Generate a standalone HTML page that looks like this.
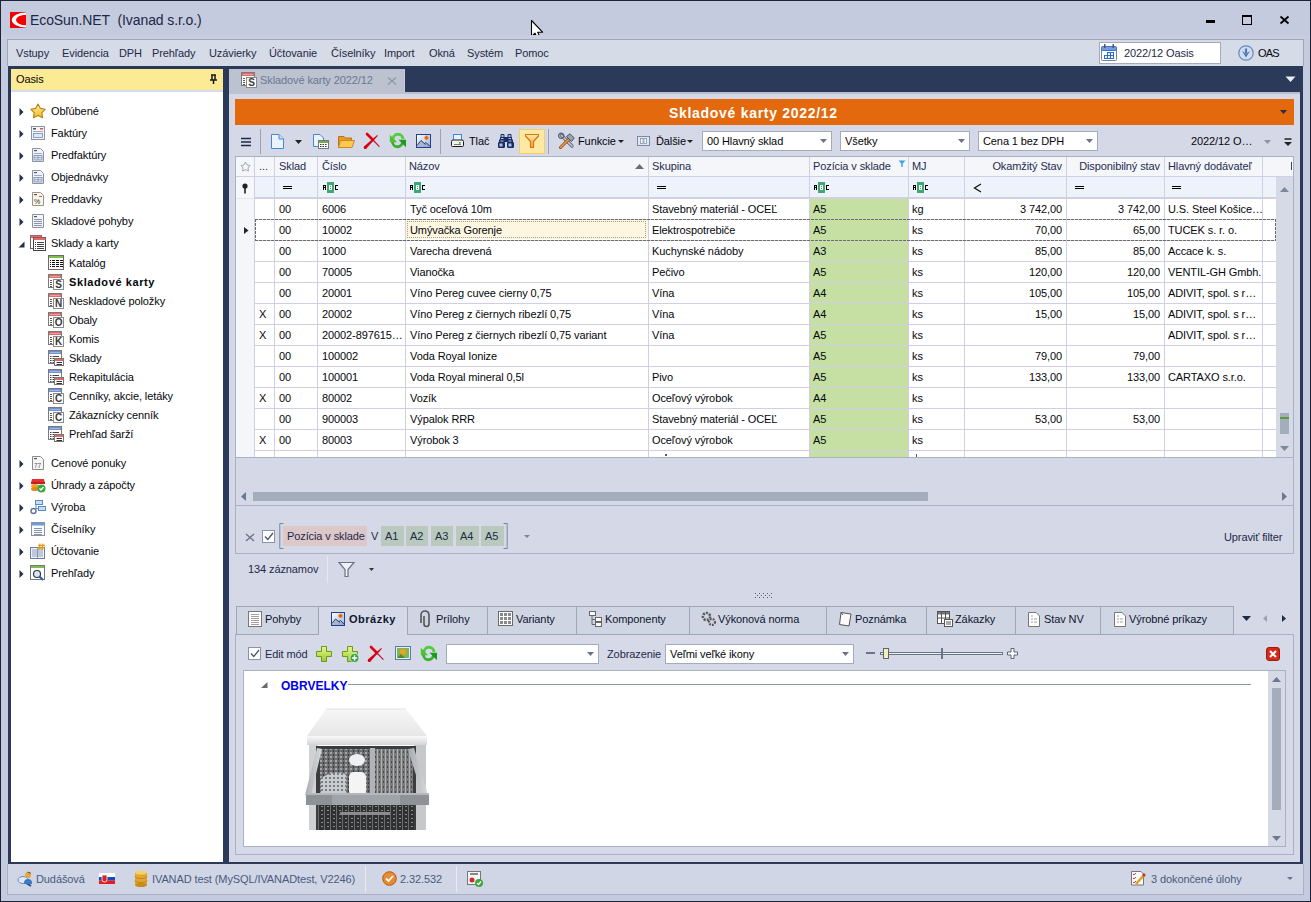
<!DOCTYPE html><html><head><meta charset="utf-8"><style>
*{margin:0;padding:0;box-sizing:content-box}
html,body{width:1311px;height:902px;overflow:hidden;background:#c5cbdf}
body{position:relative;font-family:"Liberation Sans",sans-serif}
.a{position:absolute}
.t{position:absolute;white-space:pre;font-family:"Liberation Sans",sans-serif;letter-spacing:-0.1px}
svg{overflow:visible}
</style></head><body><div class="a" style="left:0px;top:0px;width:1311px;height:902px;background:#1d2534;"></div>
<div class="a" style="left:1px;top:1px;width:1309px;height:900px;background:#c5cbdf;"></div>
<svg class="a" style="left:10px;top:12px" width="16" height="16" viewBox="0 0 16 16"><rect width="16" height="16" fill="#f40000"/><path d="M16 0.6 A14.2 7.4 0 0 0 16 15.4 V13.2 A10 5.2 0 0 1 16 2.8Z" fill="#fff"/></svg>
<div class="t" style="left:30px;top:13px;font-size:14px;line-height:14px;color:#1b2747;letter-spacing:-0.1px">EcoSun.NET&nbsp;&nbsp;(Ivanad s.r.o.)</div>
<div class="a" style="left:1206px;top:20px;width:9px;height:3px;background:#000;"></div>
<div class="a" style="left:1242px;top:15px;width:8px;height:8px;border:1px solid #000;background:transparent;border-top-width:2px;height:7px"></div>
<svg class="a" style="left:1279px;top:15px" width="11" height="10" viewBox="0 0 11 10"><path d="M1.5 1.5 L9.5 8.5 M9.5 1.5 L1.5 8.5" stroke="#000" stroke-width="1.8"/></svg>
<svg class="a" style="left:530px;top:19px" width="15" height="22" viewBox="0 0 15 22"><path d="M1.5 1.5 L1.5 17.5 L5 14.2 L7.6 19.6 L10.2 18.5 L7.7 13.2 L12.6 13.2 Z" fill="#fff" stroke="#000" stroke-width="1.1" stroke-linejoin="round"/></svg>
<div class="a" style="left:1px;top:35px;width:1309px;height:4px;background:#c8cde0;"></div>
<div class="a" style="left:7px;top:39px;width:1297px;height:27px;background:#9ea6b9;"></div>
<div class="a" style="left:8px;top:40px;width:1295px;height:26px;background:#d6dbe8;"></div>
<div class="t" style="left:16px;top:48px;font-size:11px;line-height:11px;color:#1e2a44;">Vstupy</div>
<div class="t" style="left:62px;top:48px;font-size:11px;line-height:11px;color:#1e2a44;">Evidencia</div>
<div class="t" style="left:119px;top:48px;font-size:11px;line-height:11px;color:#1e2a44;">DPH</div>
<div class="t" style="left:152px;top:48px;font-size:11px;line-height:11px;color:#1e2a44;">Prehľady</div>
<div class="t" style="left:209px;top:48px;font-size:11px;line-height:11px;color:#1e2a44;">Uzávierky</div>
<div class="t" style="left:269px;top:48px;font-size:11px;line-height:11px;color:#1e2a44;">Účtovanie</div>
<div class="t" style="left:331px;top:48px;font-size:11px;line-height:11px;color:#1e2a44;">Číselníky</div>
<div class="t" style="left:384px;top:48px;font-size:11px;line-height:11px;color:#1e2a44;">Import</div>
<div class="t" style="left:429px;top:48px;font-size:11px;line-height:11px;color:#1e2a44;">Okná</div>
<div class="t" style="left:467px;top:48px;font-size:11px;line-height:11px;color:#1e2a44;">Systém</div>
<div class="t" style="left:515px;top:48px;font-size:11px;line-height:11px;color:#1e2a44;">Pomoc</div>
<div class="a" style="left:1099px;top:42px;width:120px;height:20px;border:1px solid #a3abbd;background:#fff;"></div>
<svg class="a" style="left:1101px;top:44px" width="17" height="18" viewBox="0 0 17 18"><rect x="0.5" y="3.5" width="15" height="13" rx="1" fill="#fff" stroke="#7a8088"/><rect x="0.5" y="2.5" width="15" height="4" rx="1" fill="#6e9ce6" stroke="#3f6fd0"/><rect x="3" y="0" width="1.5" height="4" fill="#556"/><rect x="11.5" y="0" width="1.5" height="4" fill="#556"/><rect x="6" y="8" width="7" height="4" fill="#2f6cc8"/><rect x="3" y="11" width="10" height="4" fill="#2f6cc8"/><g fill="#e8f4ff"><rect x="7" y="9" width="2" height="2"/><rect x="10" y="9" width="2" height="2"/><rect x="4" y="12" width="2" height="2"/><rect x="7" y="12" width="2" height="2"/><rect x="10" y="12" width="2" height="2"/></g></svg>
<div class="t" style="left:1124px;top:48px;font-size:11px;line-height:11px;color:#1e2a44;">2022/12 Oasis</div>
<svg class="a" style="left:1238px;top:45px" width="16" height="16" viewBox="0 0 16 16"><circle cx="8" cy="8" r="7.2" fill="none" stroke="#5a8ac6" stroke-width="1.2"/><path d="M8 3.5 V8" stroke="#4a7cc0" stroke-width="2.2"/><path d="M4 6 L8 12.5 L12 6 L8 8.5Z" fill="#4a7cc0"/></svg>
<div class="t" style="left:1258px;top:48px;font-size:11px;line-height:11px;color:#05060c;letter-spacing:-0.8px">OAS</div>
<div class="a" style="left:8px;top:66px;width:1295px;height:798px;background:#2b3a58;"></div>
<div class="a" style="left:11px;top:69px;width:212px;height:793px;background:#ffffff;"></div>
<div class="a" style="left:11px;top:69px;width:212px;height:21px;background:#fdea94;"></div>
<div class="a" style="left:11px;top:90px;width:212px;height:2px;background:#d3dbee;"></div>
<div class="t" style="left:16px;top:74px;font-size:11px;line-height:11px;color:#05060c;">Oasis</div>
<svg class="a" style="left:209px;top:74px" width="9" height="10" viewBox="0 0 9 10"><path d="M2 1 H7 M3 1 V6 M6 1 V6 M1 6 H8 M4.5 6 V10" stroke="#1a1a1a" stroke-width="1.5" fill="none"/></svg>
<svg class="a" style="left:19px;top:108px" width="5" height="8" viewBox="0 0 5 8"><path d="M0.5 0 L4.5 4 L0.5 8Z" fill="#24304a"/></svg>
<svg class="a" style="left:30px;top:103px" width="16" height="16" viewBox="0 0 16 16"><defs><linearGradient id="stg" x1="0" y1="0" x2="0" y2="1"><stop offset="0" stop-color="#fff3a0"/><stop offset="1" stop-color="#f0b820"/></linearGradient></defs><path d="M8 1 L10.4 5.4 L15.2 6.2 L11.8 9.8 L12.6 14.8 L8 12.6 L3.4 14.8 L4.2 9.8 L0.8 6.2 L5.6 5.4Z" fill="url(#stg)" stroke="#b88010" stroke-width="1.1" stroke-linejoin="round"/></svg>
<div class="t" style="left:51px;top:106px;font-size:11px;line-height:11px;color:#05060c;">Obľúbené</div>
<svg class="a" style="left:19px;top:130px" width="5" height="8" viewBox="0 0 5 8"><path d="M0.5 0 L4.5 4 L0.5 8Z" fill="#24304a"/></svg>
<svg class="a" style="left:30px;top:125px" width="16" height="16" viewBox="0 0 16 16"><rect x="1.5" y="1.5" width="13" height="13" fill="#f2f4f8" stroke="#8a94a6"/><rect x="3" y="3" width="3" height="1.5" fill="#555"/><rect x="10" y="3" width="3" height="1.5" fill="#e05050"/><rect x="3" y="6" width="10" height="0.8" fill="#8899bb"/><rect x="3.5" y="8.5" width="9" height="4" fill="#dfe7f4" stroke="#7a8cb0" stroke-width="0.8"/></svg>
<div class="t" style="left:51px;top:128px;font-size:11px;line-height:11px;color:#05060c;">Faktúry</div>
<svg class="a" style="left:19px;top:152px" width="5" height="8" viewBox="0 0 5 8"><path d="M0.5 0 L4.5 4 L0.5 8Z" fill="#24304a"/></svg>
<svg class="a" style="left:30px;top:147px" width="16" height="16" viewBox="0 0 16 16"><path d="M2.5 1.5 H10.5 L13.5 4.5 V14.5 H2.5Z" fill="#f2f4f8" stroke="#8a94a6"/><rect x="4" y="3" width="3" height="1.2" fill="#555"/><rect x="4" y="6" width="8" height="0.8" fill="#8899bb"/><rect x="4" y="8.5" width="8" height="4.5" fill="#dfe7f4" stroke="#7a8cb0" stroke-width="0.8"/><path d="M4 10.7 H12 M8 8.5 V13" stroke="#7a8cb0" stroke-width="0.7"/></svg>
<div class="t" style="left:51px;top:150px;font-size:11px;line-height:11px;color:#05060c;">Predfaktúry</div>
<svg class="a" style="left:19px;top:174px" width="5" height="8" viewBox="0 0 5 8"><path d="M0.5 0 L4.5 4 L0.5 8Z" fill="#24304a"/></svg>
<svg class="a" style="left:30px;top:169px" width="16" height="16" viewBox="0 0 16 16"><path d="M2.5 1.5 H10.5 L13.5 4.5 V14.5 H2.5Z" fill="#f2f4f8" stroke="#8a94a6"/><rect x="4" y="3" width="3" height="1.2" fill="#555"/><rect x="4" y="6" width="8" height="0.8" fill="#8899bb"/><rect x="4" y="8.5" width="8" height="4.5" fill="#dfe7f4" stroke="#7a8cb0" stroke-width="0.8"/><path d="M4 10.7 H12 M8 8.5 V13" stroke="#7a8cb0" stroke-width="0.7"/></svg>
<div class="t" style="left:51px;top:172px;font-size:11px;line-height:11px;color:#05060c;">Objednávky</div>
<svg class="a" style="left:19px;top:196px" width="5" height="8" viewBox="0 0 5 8"><path d="M0.5 0 L4.5 4 L0.5 8Z" fill="#24304a"/></svg>
<svg class="a" style="left:30px;top:191px" width="16" height="16" viewBox="0 0 16 16"><path d="M2.5 1.5 H10.5 L13.5 4.5 V14.5 H2.5Z" fill="#f8f6ee" stroke="#9a9480"/><rect x="4" y="3" width="3" height="1.2" fill="#555"/><rect x="9" y="5" width="3" height="1" fill="#e05050"/><text x="4" y="13" font-size="7" font-family="Liberation Sans" fill="#333">%</text></svg>
<div class="t" style="left:51px;top:194px;font-size:11px;line-height:11px;color:#05060c;">Preddavky</div>
<svg class="a" style="left:19px;top:218px" width="5" height="8" viewBox="0 0 5 8"><path d="M0.5 0 L4.5 4 L0.5 8Z" fill="#24304a"/></svg>
<svg class="a" style="left:30px;top:213px" width="16" height="16" viewBox="0 0 16 16"><path d="M2.5 1.5 H13.5 V14.5 H2.5Z" fill="#f4f5f8" stroke="#8a94a6"/><rect x="4" y="3" width="3" height="1.2" fill="#555"/><path d="M4 6.5 H12 M4 8.5 H12 M4 10.5 H12 M4 12.5 H12" stroke="#8a94a6" stroke-width="1"/></svg>
<div class="t" style="left:51px;top:216px;font-size:11px;line-height:11px;color:#05060c;">Skladové pohyby</div>
<svg class="a" style="left:18px;top:241px" width="7" height="7" viewBox="0 0 7 7"><path d="M6.5 0.5 V6.5 H0.5Z" fill="#24304a"/></svg>
<svg class="a" style="left:30px;top:235px" width="17" height="16" viewBox="0 0 17 16"><rect x="0.5" y="0.5" width="11" height="13" fill="#fff" stroke="#666"/><rect x="0.5" y="0.5" width="11" height="2.5" fill="#e06a6a"/><rect x="3.5" y="2.5" width="12" height="13" fill="#fff" stroke="#444"/><rect x="3.5" y="2.5" width="12" height="2.5" fill="#e06a6a"/><path d="M5 7.5 H6 M7 7.5 H14 M5 9.5 H6 M7 9.5 H14 M5 11.5 H6 M7 11.5 H14 M5 13.5 H6 M7 13.5 H14" stroke="#444" stroke-width="1"/></svg>
<div class="t" style="left:51px;top:238px;font-size:11px;line-height:11px;color:#05060c;">Sklady a karty</div>
<svg class="a" style="left:48px;top:255px" width="16" height="16" viewBox="0 0 16 16"><rect x="0.5" y="0.5" width="15" height="14" fill="#fff" stroke="#6a6a6a"/><rect x="1" y="1" width="14" height="2" fill="#7cc04a"/><rect x="2" y="5" width="1" height="1" fill="#111"/><rect x="4" y="5" width="3" height="1" fill="#111"/><rect x="8" y="5" width="3" height="1" fill="#111"/><rect x="12" y="5" width="3" height="1" fill="#111"/><rect x="2" y="7" width="1" height="1" fill="#111"/><rect x="4" y="7" width="3" height="1" fill="#111"/><rect x="8" y="7" width="3" height="1" fill="#111"/><rect x="12" y="7" width="3" height="1" fill="#111"/><rect x="2" y="9" width="1" height="1" fill="#111"/><rect x="4" y="9" width="3" height="1" fill="#111"/><rect x="8" y="9" width="3" height="1" fill="#111"/><rect x="12" y="9" width="3" height="1" fill="#111"/><rect x="2" y="11" width="1" height="1" fill="#111"/><rect x="4" y="11" width="3" height="1" fill="#111"/><rect x="8" y="11" width="3" height="1" fill="#111"/><rect x="12" y="11" width="3" height="1" fill="#111"/></svg>
<div class="t" style="left:69px;top:258px;font-size:11px;line-height:11px;color:#05060c;">Katalóg</div>
<svg class="a" style="left:48px;top:274px" width="16" height="16" viewBox="0 0 16 16"><rect x="0.5" y="0.5" width="13" height="13" fill="#fff" stroke="#7a7a7a"/><rect x="1" y="1" width="12" height="3" fill="#e06a6a"/><rect x="2" y="2" width="10" height="1" fill="#fff" opacity="0.35"/><path d="M2 6.5 H4 M2 8.5 H4 M2 10.5 H4 M2 12.5 H4" stroke="#555" stroke-width="1"/><rect x="5.5" y="5.5" width="10" height="10" fill="#fff" stroke="#8a8a8a"/><text x="10.7" y="14" text-anchor="middle" font-size="10" font-weight="bold" font-family="Liberation Sans" fill="#3a3a3a">S</text></svg>
<div class="t" style="left:69px;top:277px;font-size:11px;line-height:11px;color:#05060c;font-weight:bold;letter-spacing:0.6px">Skladové karty</div>
<svg class="a" style="left:48px;top:293px" width="16" height="16" viewBox="0 0 16 16"><rect x="0.5" y="0.5" width="13" height="13" fill="#fff" stroke="#7a7a7a"/><rect x="1" y="1" width="12" height="3" fill="#e06a6a"/><rect x="2" y="2" width="10" height="1" fill="#fff" opacity="0.35"/><path d="M2 6.5 H4 M2 8.5 H4 M2 10.5 H4 M2 12.5 H4" stroke="#555" stroke-width="1"/><rect x="5.5" y="5.5" width="10" height="10" fill="#fff" stroke="#8a8a8a"/><text x="10.7" y="14" text-anchor="middle" font-size="10" font-weight="bold" font-family="Liberation Sans" fill="#3a3a3a">N</text></svg>
<div class="t" style="left:69px;top:296px;font-size:11px;line-height:11px;color:#05060c;">Neskladové položky</div>
<svg class="a" style="left:48px;top:312px" width="16" height="16" viewBox="0 0 16 16"><rect x="0.5" y="0.5" width="13" height="13" fill="#fff" stroke="#7a7a7a"/><rect x="1" y="1" width="12" height="3" fill="#e06a6a"/><rect x="2" y="2" width="10" height="1" fill="#fff" opacity="0.35"/><path d="M2 6.5 H4 M2 8.5 H4 M2 10.5 H4 M2 12.5 H4" stroke="#555" stroke-width="1"/><rect x="5.5" y="5.5" width="10" height="10" fill="#fff" stroke="#8a8a8a"/><text x="10.7" y="14" text-anchor="middle" font-size="10" font-weight="bold" font-family="Liberation Sans" fill="#3a3a3a">O</text></svg>
<div class="t" style="left:69px;top:315px;font-size:11px;line-height:11px;color:#05060c;">Obaly</div>
<svg class="a" style="left:48px;top:331px" width="16" height="16" viewBox="0 0 16 16"><rect x="0.5" y="0.5" width="13" height="13" fill="#fff" stroke="#7a7a7a"/><rect x="1" y="1" width="12" height="3" fill="#e06a6a"/><rect x="2" y="2" width="10" height="1" fill="#fff" opacity="0.35"/><path d="M2 6.5 H4 M2 8.5 H4 M2 10.5 H4 M2 12.5 H4" stroke="#555" stroke-width="1"/><rect x="5.5" y="5.5" width="10" height="10" fill="#fff" stroke="#8a8a8a"/><text x="10.7" y="14" text-anchor="middle" font-size="10" font-weight="bold" font-family="Liberation Sans" fill="#3a3a3a">K</text></svg>
<div class="t" style="left:69px;top:334px;font-size:11px;line-height:11px;color:#05060c;">Komis</div>
<svg class="a" style="left:48px;top:350px" width="16" height="16" viewBox="0 0 16 16"><rect x="0.5" y="0.5" width="13" height="13" fill="#fff" stroke="#7a7a7a"/><rect x="1" y="1" width="12" height="3" fill="#6d8fd8"/><rect x="2" y="2" width="10" height="1" fill="#fff" opacity="0.35"/><path d="M2 6.5 H3.5 M2 8.5 H3.5 M2 10.5 H3.5 M2 12.5 H3.5 M4.5 6.5 H11 M4.5 8.5 H7 M4.5 10.5 H6 M4.5 12.5 H6" stroke="#444" stroke-width="1"/><rect x="6.5" y="8.5" width="9" height="7" fill="#fff" stroke="#777"/><rect x="7" y="9" width="8" height="2" fill="#e06a6a"/><path d="M8.5 12.5 H14 M8.5 14.5 H14" stroke="#333" stroke-width="1"/></svg>
<div class="t" style="left:69px;top:353px;font-size:11px;line-height:11px;color:#05060c;">Sklady</div>
<svg class="a" style="left:48px;top:369px" width="16" height="16" viewBox="0 0 16 16"><rect x="0.5" y="0.5" width="13" height="13" fill="#fff" stroke="#7a7a7a"/><rect x="1" y="1" width="12" height="3" fill="#6d8fd8"/><rect x="2" y="2" width="10" height="1" fill="#fff" opacity="0.35"/><path d="M2 6.5 H3.5 M2 8.5 H3.5 M2 10.5 H3.5 M2 12.5 H3.5 M4.5 6.5 H11 M4.5 8.5 H7 M4.5 10.5 H6 M4.5 12.5 H6" stroke="#444" stroke-width="1"/><rect x="6.5" y="8.5" width="9" height="7" fill="#fff" stroke="#777"/><rect x="7" y="9" width="8" height="2" fill="#e06a6a"/><path d="M8.5 12.5 H14 M8.5 14.5 H14" stroke="#333" stroke-width="1"/></svg>
<div class="t" style="left:69px;top:372px;font-size:11px;line-height:11px;color:#05060c;">Rekapitulácia</div>
<svg class="a" style="left:48px;top:388px" width="16" height="16" viewBox="0 0 16 16"><rect x="0.5" y="0.5" width="13" height="13" fill="#fff" stroke="#7a7a7a"/><rect x="1" y="1" width="12" height="3" fill="#6d8fd8"/><rect x="2" y="2" width="10" height="1" fill="#fff" opacity="0.35"/><path d="M2 6.5 H4 M2 8.5 H4 M2 10.5 H4 M2 12.5 H4" stroke="#555" stroke-width="1"/><rect x="5.5" y="5.5" width="10" height="10" fill="#fff" stroke="#8a8a8a"/><text x="10.7" y="14" text-anchor="middle" font-size="10" font-weight="bold" font-family="Liberation Sans" fill="#3a3a3a">C</text></svg>
<div class="t" style="left:69px;top:391px;font-size:11px;line-height:11px;color:#05060c;">Cenníky, akcie, letáky</div>
<svg class="a" style="left:48px;top:407px" width="16" height="16" viewBox="0 0 16 16"><rect x="0.5" y="0.5" width="13" height="13" fill="#fff" stroke="#7a7a7a"/><rect x="1" y="1" width="12" height="3" fill="#6d8fd8"/><rect x="2" y="2" width="10" height="1" fill="#fff" opacity="0.35"/><path d="M2 6.5 H4 M2 8.5 H4 M2 10.5 H4 M2 12.5 H4" stroke="#555" stroke-width="1"/><rect x="5.5" y="5.5" width="10" height="10" fill="#fff" stroke="#8a8a8a"/><text x="10.7" y="14" text-anchor="middle" font-size="10" font-weight="bold" font-family="Liberation Sans" fill="#3a3a3a">C</text></svg>
<div class="t" style="left:69px;top:410px;font-size:11px;line-height:11px;color:#05060c;">Zákaznícky cenník</div>
<svg class="a" style="left:48px;top:426px" width="16" height="16" viewBox="0 0 16 16"><rect x="0.5" y="0.5" width="13" height="13" fill="#fff" stroke="#7a7a7a"/><rect x="1" y="1" width="12" height="3" fill="#6d8fd8"/><rect x="2" y="2" width="10" height="1" fill="#fff" opacity="0.35"/><path d="M2 6.5 H3.5 M2 8.5 H3.5 M2 10.5 H3.5 M2 12.5 H3.5 M4.5 6.5 H11 M4.5 8.5 H7 M4.5 10.5 H6 M4.5 12.5 H6" stroke="#444" stroke-width="1"/><rect x="6.5" y="8.5" width="9" height="7" fill="#fff" stroke="#777"/><rect x="7" y="9" width="8" height="2" fill="#e06a6a"/><path d="M8.5 12.5 H14 M8.5 14.5 H14" stroke="#333" stroke-width="1"/></svg>
<div class="t" style="left:69px;top:429px;font-size:11px;line-height:11px;color:#05060c;">Prehľad šarží</div>
<svg class="a" style="left:19px;top:460px" width="5" height="8" viewBox="0 0 5 8"><path d="M0.5 0 L4.5 4 L0.5 8Z" fill="#24304a"/></svg>
<svg class="a" style="left:30px;top:455px" width="16" height="16" viewBox="0 0 16 16"><path d="M2.5 1.5 H10.5 L13.5 4.5 V14.5 H2.5Z" fill="#f6f6f6" stroke="#8a8a8a"/><rect x="4" y="3" width="3" height="1.2" fill="#555"/><text x="4" y="12.5" font-size="6.5" font-family="Liberation Sans" fill="#555">77</text></svg>
<div class="t" style="left:51px;top:458px;font-size:11px;line-height:11px;color:#05060c;">Cenové ponuky</div>
<svg class="a" style="left:19px;top:482px" width="5" height="8" viewBox="0 0 5 8"><path d="M0.5 0 L4.5 4 L0.5 8Z" fill="#24304a"/></svg>
<svg class="a" style="left:30px;top:477px" width="16" height="16" viewBox="0 0 16 16"><path d="M1 6 L2 2 H14 L15 6Z" fill="#e53030"/><rect x="1" y="5" width="14" height="2" fill="#c81e1e"/><ellipse cx="5" cy="9" rx="4" ry="2" fill="#f0a030"/><ellipse cx="5" cy="12" rx="4" ry="2" fill="#e08a20"/><circle cx="11.5" cy="11.5" r="4" fill="#3aa83a"/><path d="M9.5 11.5 L11 13 L13.5 10" stroke="#fff" stroke-width="1.3" fill="none"/></svg>
<div class="t" style="left:51px;top:480px;font-size:11px;line-height:11px;color:#05060c;">Úhrady a zápočty</div>
<svg class="a" style="left:19px;top:504px" width="5" height="8" viewBox="0 0 5 8"><path d="M0.5 0 L4.5 4 L0.5 8Z" fill="#24304a"/></svg>
<svg class="a" style="left:30px;top:499px" width="16" height="16" viewBox="0 0 16 16"><rect x="5.5" y="1.5" width="7" height="4" fill="#c8dcf4" stroke="#5a8ac6"/><rect x="8.5" y="7.5" width="7" height="4" fill="#c8dcf4" stroke="#5a8ac6"/><path d="M6 6 V9.5 H8.5" stroke="#5a8ac6" fill="none"/><circle cx="3.5" cy="12" r="2.5" fill="none" stroke="#667799" stroke-width="1.5"/></svg>
<div class="t" style="left:51px;top:502px;font-size:11px;line-height:11px;color:#05060c;">Výroba</div>
<svg class="a" style="left:19px;top:526px" width="5" height="8" viewBox="0 0 5 8"><path d="M0.5 0 L4.5 4 L0.5 8Z" fill="#24304a"/></svg>
<svg class="a" style="left:30px;top:521px" width="16" height="16" viewBox="0 0 16 16"><rect x="1.5" y="1.5" width="13" height="13" fill="#fafbfd" stroke="#8a94a6"/><rect x="2" y="2" width="12" height="2.5" fill="#6d9ad8"/><path d="M4 7.5 H12 M4 9.5 H12 M4 11.5 H12 M4 13.5 H12" stroke="#8a94a6" stroke-width="1"/></svg>
<div class="t" style="left:51px;top:524px;font-size:11px;line-height:11px;color:#05060c;">Číselníky</div>
<svg class="a" style="left:19px;top:548px" width="5" height="8" viewBox="0 0 5 8"><path d="M0.5 0 L4.5 4 L0.5 8Z" fill="#24304a"/></svg>
<svg class="a" style="left:30px;top:543px" width="16" height="16" viewBox="0 0 16 16"><rect x="0.5" y="4.5" width="14" height="11" fill="#eef2f8" stroke="#6a7ea8"/><path d="M2 7 H13 M2 9 H13 M2 11 H13 M2 13 H13 M7.5 5 V15" stroke="#7a8cb0" stroke-width="0.8"/><path d="M10 0.5 L9 7 M13 0.5 L12 7 M8 2.5 H15 M7.5 5 H14.5" stroke="#e0a020" stroke-width="1.3"/></svg>
<div class="t" style="left:51px;top:546px;font-size:11px;line-height:11px;color:#05060c;">Účtovanie</div>
<svg class="a" style="left:19px;top:570px" width="5" height="8" viewBox="0 0 5 8"><path d="M0.5 0 L4.5 4 L0.5 8Z" fill="#24304a"/></svg>
<svg class="a" style="left:30px;top:565px" width="16" height="16" viewBox="0 0 16 16"><rect x="0.5" y="0.5" width="14" height="14" fill="#fff" stroke="#777"/><rect x="1" y="1" width="13" height="2" fill="#7cc04a"/><circle cx="7" cy="9" r="3.5" fill="#dde8f4" stroke="#334" stroke-width="1.2"/><path d="M9.5 11.5 L13 15" stroke="#2a5ca8" stroke-width="2"/></svg>
<div class="t" style="left:51px;top:568px;font-size:11px;line-height:11px;color:#05060c;">Prehľady</div>
<div class="a" style="left:229px;top:69px;width:176px;height:25px;background:#bcc2cf;"></div>
<div class="a" style="left:404px;top:69px;width:1px;height:23px;background:#c6ccd8;"></div>
<div class="a" style="left:405px;top:92px;width:895px;height:2px;background:#b9c0cc;"></div>
<svg class="a" style="left:241px;top:72px" width="16" height="16" viewBox="0 0 16 16"><rect x="0.5" y="0.5" width="13" height="13" fill="#fff" stroke="#7a7a7a"/><rect x="1" y="1" width="12" height="3" fill="#e06a6a"/><rect x="2" y="2" width="10" height="1" fill="#fff" opacity="0.35"/><path d="M2 6.5 H4 M2 8.5 H4 M2 10.5 H4 M2 12.5 H4" stroke="#555" stroke-width="1"/><rect x="5.5" y="5.5" width="10" height="10" fill="#fff" stroke="#8a8a8a"/><text x="10.7" y="14" text-anchor="middle" font-size="10" font-weight="bold" font-family="Liberation Sans" fill="#3a3a3a">S</text></svg>
<div class="t" style="left:260px;top:75px;font-size:11px;line-height:11px;color:#6a7894;">Skladové karty 2022/12</div>
<svg class="a" style="left:387px;top:77px" width="10" height="8" viewBox="0 0 10 8"><path d="M1 0.5 L9 7.5 M9 0.5 L1 7.5" stroke="#8f98a8" stroke-width="1.3"/></svg>
<svg class="a" style="left:1285px;top:76px" width="11" height="7" viewBox="0 0 11 7"><path d="M0.5 0.5 H10.5 L5.5 6Z" fill="#e8ecf4"/></svg>
<div class="a" style="left:229px;top:94px;width:1071px;height:768px;background:#d5d9e7;"></div>
<div class="a" style="left:235px;top:99px;width:1059px;height:26px;background:#e3690c;"></div>
<div class="t" style="left:669px;top:106px;font-size:14px;line-height:14px;color:#ffffff;font-weight:bold;letter-spacing:0.7px">Skladové karty 2022/12</div>
<svg class="a" style="left:1280px;top:110px" width="7" height="5" viewBox="0 0 7 5"><path d="M0 0 H7 L3.5 4Z" fill="#2b2b3a"/></svg>
<svg class="a" style="left:241px;top:137px" width="11" height="10" viewBox="0 0 11 10"><path d="M0 1.5 H10 M0 5 H10 M0 8.5 H10" stroke="#1f2a48" stroke-width="1.6"/></svg>
<div class="a" style="left:260px;top:129px;width:1px;height:25px;background:#9aa3b5;"></div>
<svg class="a" style="left:271px;top:134px" width="13" height="15" viewBox="0 0 13 15"><path d="M0.5 0.5 H8 L12.5 5 V14.5 H0.5Z" fill="#eaf2fc" stroke="#4a86d0"/><path d="M8 0.5 V5 H12.5" fill="#cfe0f6" stroke="#4a86d0"/></svg>
<svg class="a" style="left:295px;top:140px" width="7" height="4" viewBox="0 0 7 4"><path d="M0 0 H7 L3.5 4Z" fill="#222"/></svg>
<svg class="a" style="left:313px;top:134px" width="16" height="15" viewBox="0 0 16 15"><path d="M0.5 0.5 H7 L10.5 4 V12.5 H0.5Z" fill="#eaf2fc" stroke="#4a86d0"/><rect x="5.5" y="6.5" width="10" height="8" fill="#fff" stroke="#777"/><rect x="6" y="7" width="9" height="2" fill="#6fb04a"/><path d="M7 10.5 H14 M7 12.5 H14" stroke="#333" stroke-width="1" stroke-dasharray="1.5 1"/></svg>
<svg class="a" style="left:338px;top:135px" width="17" height="13" viewBox="0 0 17 13"><path d="M0.5 1.5 H6 L7.5 3 H13.5 V12.5 H0.5Z" fill="#e89a28" stroke="#c07010"/><path d="M2.5 5.5 H16.5 L14 12.5 H0.5Z" fill="#fcc850" stroke="#c88a20"/></svg>
<svg class="a" style="left:363px;top:131px" width="18" height="19" viewBox="0 0 18 19"><path d="M4 3 L10 9" stroke="#e00010" stroke-width="2.6" stroke-linecap="round"/><path d="M3.4 17.5 L1.2 15.3 L14.2 4 L14.9 4.8Z" fill="#d80010"/><circle cx="2.3" cy="16.4" r="1.6" fill="#d80010"/><path d="M10 9 L16.4 15.6" stroke="#c01030" stroke-width="1.1"/></svg>
<svg class="a" style="left:389px;top:133px" width="18" height="16" viewBox="0 0 18 16"><path d="M4 6.5 A5 5 0 0 1 14 6" fill="none" stroke="#56cc3a" stroke-width="2.8"/><path d="M0.8 1.8 V9.2 H8.2Z" fill="#4cc232"/><path d="M3.5 9 A5 5 0 0 0 13.5 8.5" fill="none" stroke="#38b02a" stroke-width="2.8"/><path d="M9.5 6.8 H17 V14.2Z" fill="#1e9a1e"/></svg>
<svg class="a" style="left:416px;top:134px" width="16" height="15" viewBox="0 0 16 15"><defs><linearGradient id="imgg" x1="0" y1="0" x2="1" y2="1"><stop offset="0" stop-color="#ffffff"/><stop offset="1" stop-color="#98b4e8"/></linearGradient></defs><rect x="0.5" y="0.5" width="14" height="13" fill="url(#imgg)" stroke="#20408a"/><path d="M1 12 L5 6.5 L9 10 L11 8.5 L14 11.5 V13 H1Z" fill="#8a9cc4" opacity="0.55"/><path d="M1 11.5 L5 6.5 L9.5 10.5 M8.5 9.5 L10 8.5 L14 12.5" fill="none" stroke="#2a3040" stroke-width="0.9"/><circle cx="10.5" cy="3.8" r="1.9" fill="#e85a10" stroke="#f4904a" stroke-width="0.8"/></svg>
<div class="a" style="left:440px;top:129px;width:1px;height:25px;background:#9aa3b5;"></div>
<svg class="a" style="left:451px;top:134px" width="13" height="14" viewBox="0 0 13 14"><rect x="2.5" y="0.5" width="8" height="6" fill="#e8f2fc" stroke="#3a8ae0"/><path d="M0.5 7.5 Q0.5 6 2 6 H11 Q12.5 6 12.5 7.5 V11.5 Q12.5 12.5 11.5 12.5 H1.5 Q0.5 12.5 0.5 11.5Z" fill="#f2f2f0" stroke="#1a1a1a" stroke-width="1"/><path d="M3 10.5 H10" stroke="#7a7a7a" stroke-width="1"/><rect x="8" y="8" width="1.6" height="1.6" fill="#22aa22"/></svg>
<div class="t" style="left:469px;top:136px;font-size:11px;line-height:11px;color:#05060c;">Tlač</div>
<svg class="a" style="left:498px;top:134px" width="16" height="14" viewBox="0 0 16 14"><g fill="#1c2c60"><rect x="2.5" y="0" width="4" height="4" rx="1"/><rect x="2" y="3" width="5" height="3"/><rect x="1" y="5.5" width="6" height="3"/><rect x="0" y="8" width="7" height="6" rx="1.2"/><rect x="9.5" y="0" width="4" height="4" rx="1"/><rect x="9" y="3" width="5" height="3"/><rect x="9" y="5.5" width="6" height="3"/><rect x="9" y="8" width="7" height="6" rx="1.2"/><rect x="6" y="3" width="4" height="5"/></g><g fill="#a8c0f4"><rect x="3.5" y="1" width="2" height="2"/><rect x="3" y="4" width="2.5" height="1"/><rect x="2.5" y="6.5" width="3" height="1"/><rect x="1.5" y="9.5" width="3" height="3"/><rect x="10.5" y="1" width="2" height="2"/><rect x="10.5" y="4" width="2.5" height="1"/><rect x="10.5" y="6.5" width="3" height="1"/><rect x="10.5" y="9.5" width="3" height="3"/></g></svg>
<div class="a" style="left:519px;top:129px;width:24px;height:23px;border:1px solid #f2cf6a;background:#fde9a4;"></div>
<svg class="a" style="left:524px;top:133px" width="16" height="16" viewBox="0 0 16 16"><defs><linearGradient id="fng" x1="0" y1="0" x2="0" y2="1"><stop offset="0" stop-color="#ffe8b0"/><stop offset="1" stop-color="#f6a030"/></linearGradient></defs><path d="M1.5 1.5 H14.5 V3 L9.5 8.5 V14.5 H6.5 V8.5 L1.5 3Z" fill="url(#fng)" stroke="#d8780e" stroke-width="1.2" stroke-linejoin="round"/></svg>
<div class="a" style="left:548px;top:129px;width:1px;height:25px;background:#9aa3b5;"></div>
<svg class="a" style="left:558px;top:133px" width="17" height="17" viewBox="0 0 17 17"><path d="M3.5 2.5 L14 13" stroke="#5a6270" stroke-width="3.2" stroke-linecap="round"/><path d="M3.5 2.5 L14 13" stroke="#c8ced8" stroke-width="1.6" stroke-linecap="round"/><circle cx="3.2" cy="2.8" r="2.6" fill="none" stroke="#5a6270" stroke-width="1.3"/><path d="M2.5 14.5 L11 6" stroke="#8a3a10" stroke-width="3" stroke-linecap="round"/><path d="M2.5 14.5 L11 6" stroke="#f0a040" stroke-width="1.6" stroke-linecap="round"/><path d="M8.5 3.5 L12 0.8 L16.2 5 L13.5 8.5Z" fill="#9aa2ae" stroke="#4a525e" stroke-width="1"/></svg>
<div class="t" style="left:578px;top:136px;font-size:11px;line-height:11px;color:#05060c;">Funkcie</div>
<svg class="a" style="left:618px;top:140px" width="6" height="3" viewBox="0 0 6 3"><path d="M0 0 H6 L3 3Z" fill="#222"/></svg>
<svg class="a" style="left:637px;top:136px" width="13" height="10" viewBox="0 0 13 10"><rect x="0.5" y="0.5" width="12" height="9" fill="#dfe8f4" stroke="#7a8aa4"/><rect x="3.5" y="2.5" width="2.5" height="5" fill="#fff" stroke="#8a9ab4" stroke-width="0.9"/><rect x="7" y="2.5" width="2.5" height="5" fill="#fff" stroke="#8a9ab4" stroke-width="0.9"/></svg>
<div class="t" style="left:656px;top:136px;font-size:11px;line-height:11px;color:#05060c;">Ďalšie</div>
<svg class="a" style="left:687px;top:140px" width="6" height="3" viewBox="0 0 6 3"><path d="M0 0 H6 L3 3Z" fill="#222"/></svg>
<div class="a" style="left:702px;top:131px;width:128px;height:18px;border:1px solid #a3abbc;background:#fff;"></div>
<div class="t" style="left:707px;top:136px;font-size:11px;line-height:11px;color:#05060c;">00 Hlavný sklad</div>
<svg class="a" style="left:820px;top:139px" width="7" height="4" viewBox="0 0 7 4"><path d="M0 0 H7 L3.5 4Z" fill="#6a7488"/></svg>
<div class="a" style="left:840px;top:131px;width:128px;height:18px;border:1px solid #a3abbc;background:#fff;"></div>
<div class="t" style="left:845px;top:136px;font-size:11px;line-height:11px;color:#05060c;">Všetky</div>
<svg class="a" style="left:958px;top:139px" width="7" height="4" viewBox="0 0 7 4"><path d="M0 0 H7 L3.5 4Z" fill="#6a7488"/></svg>
<div class="a" style="left:978px;top:131px;width:118px;height:18px;border:1px solid #a3abbc;background:#fff;"></div>
<div class="t" style="left:983px;top:136px;font-size:11px;line-height:11px;color:#05060c;">Cena 1 bez DPH</div>
<svg class="a" style="left:1086px;top:139px" width="7" height="4" viewBox="0 0 7 4"><path d="M0 0 H7 L3.5 4Z" fill="#6a7488"/></svg>
<div class="t" style="left:1191px;top:136px;font-size:11px;line-height:11px;color:#05060c;">2022/12 O…</div>
<svg class="a" style="left:1264px;top:140px" width="7" height="4" viewBox="0 0 7 4"><path d="M0 0 H7 L3.5 4Z" fill="#8a94a6"/></svg>
<svg class="a" style="left:1284px;top:138px" width="8" height="9" viewBox="0 0 8 9"><path d="M0.5 1 H7.5" stroke="#222" stroke-width="1.5"/><path d="M0 4 H8 L4 8Z" fill="#222"/></svg>
<div class="a" style="left:235px;top:156px;width:1059px;height:302px;background:#a9b1c4;"></div>
<div class="a" style="left:236px;top:157px;width:1057px;height:300px;background:#ffffff;"></div>
<div class="a" style="left:236px;top:157px;width:1057px;height:19px;background:#f5f6fa;"></div>
<div class="a" style="left:236px;top:176px;width:1057px;height:1px;background:#cfd0e6;"></div>
<div class="a" style="left:236px;top:177px;width:1040px;height:20px;background:#eef3fb;"></div>
<div class="a" style="left:236px;top:177px;width:18px;height:22px;background:#f6f7fb;"></div>
<div class="a" style="left:255px;top:197px;width:1021px;height:2px;background:#cfd1e0;"></div>
<div class="a" style="left:236px;top:198px;width:18px;height:1px;background:#e4e6ee;"></div>
<div class="a" style="left:1276px;top:177px;width:17px;height:280px;background:#d5dae6;"></div>
<svg class="a" style="left:1280px;top:187px" width="9" height="5" viewBox="0 0 9 5"><path d="M0 5 L4.5 0 L9 5Z" fill="#7c889c"/></svg>
<svg class="a" style="left:1280px;top:446px" width="9" height="5" viewBox="0 0 9 5"><path d="M0 0 L4.5 5 L9 0Z" fill="#7c889c"/></svg>
<div class="a" style="left:1280px;top:413px;width:9px;height:21px;background:#a3adbb;"></div>
<div class="a" style="left:1280px;top:417px;width:9px;height:2px;background:#5a9a3a;"></div>
<div class="a" style="left:236px;top:199px;width:18px;height:258px;background:#f5f6fa;"></div>
<div class="a" style="left:254px;top:157px;width:1px;height:300px;background:#cfd0e6;"></div>
<div class="a" style="left:274px;top:157px;width:1px;height:300px;background:#cfd0e6;"></div>
<div class="a" style="left:317px;top:157px;width:1px;height:300px;background:#cfd0e6;"></div>
<div class="a" style="left:405px;top:157px;width:1px;height:300px;background:#cfd0e6;"></div>
<div class="a" style="left:648px;top:157px;width:1px;height:300px;background:#cfd0e6;"></div>
<div class="a" style="left:809px;top:157px;width:1px;height:300px;background:#cfd0e6;"></div>
<div class="a" style="left:908px;top:157px;width:1px;height:300px;background:#cfd0e6;"></div>
<div class="a" style="left:964px;top:157px;width:1px;height:300px;background:#cfd0e6;"></div>
<div class="a" style="left:1066px;top:157px;width:1px;height:300px;background:#cfd0e6;"></div>
<div class="a" style="left:1164px;top:157px;width:1px;height:300px;background:#cfd0e6;"></div>
<div class="a" style="left:1262px;top:157px;width:1px;height:300px;background:#cfd0e6;"></div>
<div class="a" style="left:810px;top:199px;width:98px;height:258px;background:#c6dfa2;"></div>
<div class="a" style="left:255px;top:219px;width:1021px;height:1px;background:#cfd0e6;"></div>
<div class="a" style="left:255px;top:240px;width:1021px;height:1px;background:#cfd0e6;"></div>
<div class="a" style="left:255px;top:261px;width:1021px;height:1px;background:#cfd0e6;"></div>
<div class="a" style="left:255px;top:282px;width:1021px;height:1px;background:#cfd0e6;"></div>
<div class="a" style="left:255px;top:303px;width:1021px;height:1px;background:#cfd0e6;"></div>
<div class="a" style="left:255px;top:324px;width:1021px;height:1px;background:#cfd0e6;"></div>
<div class="a" style="left:255px;top:345px;width:1021px;height:1px;background:#cfd0e6;"></div>
<div class="a" style="left:255px;top:366px;width:1021px;height:1px;background:#cfd0e6;"></div>
<div class="a" style="left:255px;top:387px;width:1021px;height:1px;background:#cfd0e6;"></div>
<div class="a" style="left:255px;top:408px;width:1021px;height:1px;background:#cfd0e6;"></div>
<div class="a" style="left:255px;top:429px;width:1021px;height:1px;background:#cfd0e6;"></div>
<div class="a" style="left:255px;top:450px;width:1021px;height:1px;background:#cfd0e6;"></div>
<svg class="a" style="left:240px;top:161px" width="11" height="11" viewBox="0 0 11 11"><path d="M5.5 1 L7 4 L10 4.5 L8 7 L8.5 10 L5.5 8.7 L2.5 10 L3 7 L1 4.5 L4 4Z" fill="none" stroke="#9aa0ac" stroke-width="0.9"/></svg>
<div class="t" style="left:259px;top:161px;font-size:11px;line-height:11px;color:#2a2a6a;">...</div>
<div class="t" style="left:279px;top:161px;font-size:11px;line-height:11px;color:#232d50;">Sklad</div>
<div class="t" style="left:322px;top:161px;font-size:11px;line-height:11px;color:#232d50;">Číslo</div>
<div class="t" style="left:409px;top:161px;font-size:11px;line-height:11px;color:#232d50;">Názov</div>
<div class="t" style="left:652px;top:161px;font-size:11px;line-height:11px;color:#232d50;">Skupina</div>
<div class="t" style="left:813px;top:161px;font-size:11px;line-height:11px;color:#232d50;">Pozícia v sklade</div>
<div class="t" style="left:912px;top:161px;font-size:11px;line-height:11px;color:#232d50;">MJ</div>
<div class="t" style="left:1168px;top:161px;font-size:11px;line-height:11px;color:#232d50;">Hlavný dodávateľ</div>
<div class="t" style="right:249px;top:161px;font-size:11px;line-height:11px;color:#232d50;">Okamžitý Stav</div>
<div class="t" style="right:151px;top:161px;font-size:11px;line-height:11px;color:#232d50;">Disponibilný stav</div>
<div class="a" style="left:1291px;top:162px;width:1px;height:8px;background:#3a4260;"></div>
<svg class="a" style="left:635px;top:164px" width="9" height="5" viewBox="0 0 9 5"><path d="M0 5 L4.5 0 L9 5Z" fill="#6a6e78"/></svg>
<svg class="a" style="left:898px;top:160px" width="8" height="8" viewBox="0 0 8 8"><path d="M0.5 0.5 H7.5 L4.7 3.5 V7 H3.3 V3.5Z" fill="#3aa0e0"/></svg>
<svg class="a" style="left:241px;top:183px" width="8" height="11" viewBox="0 0 8 11"><circle cx="4" cy="3" r="2.6" fill="#222"/><rect x="3.2" y="4" width="1.6" height="6.5" fill="#222"/></svg>
<div class="a" style="left:283px;top:186px;width:9px;height:1px;background:#000;"></div>
<div class="a" style="left:283px;top:188px;width:9px;height:1px;background:#000;"></div>
<svg class="a" style="left:322px;top:182px" width="17" height="11" viewBox="0 0 17 11"><rect x="5" y="0" width="7" height="11" fill="#3ea873"/><rect x="1" y="3" width="1" height="1" fill="#000"/><rect x="2" y="3" width="1" height="1" fill="#000"/><rect x="3" y="3" width="1" height="1" fill="#000"/><rect x="1" y="4" width="1" height="1" fill="#000"/><rect x="3" y="4" width="1" height="1" fill="#000"/><rect x="1" y="5" width="1" height="1" fill="#000"/><rect x="2" y="5" width="1" height="1" fill="#000"/><rect x="3" y="5" width="1" height="1" fill="#000"/><rect x="1" y="6" width="1" height="1" fill="#000"/><rect x="3" y="6" width="1" height="1" fill="#000"/><rect x="1" y="7" width="1" height="1" fill="#000"/><rect x="3" y="7" width="1" height="1" fill="#000"/><rect x="7" y="3" width="1" height="1" fill="#fff"/><rect x="8" y="3" width="1" height="1" fill="#fff"/><rect x="9" y="3" width="1" height="1" fill="#fff"/><rect x="7" y="4" width="1" height="1" fill="#fff"/><rect x="9" y="4" width="1" height="1" fill="#fff"/><rect x="7" y="5" width="1" height="1" fill="#fff"/><rect x="8" y="5" width="1" height="1" fill="#fff"/><rect x="9" y="5" width="1" height="1" fill="#fff"/><rect x="7" y="6" width="1" height="1" fill="#fff"/><rect x="9" y="6" width="1" height="1" fill="#fff"/><rect x="7" y="7" width="1" height="1" fill="#fff"/><rect x="8" y="7" width="1" height="1" fill="#fff"/><rect x="9" y="7" width="1" height="1" fill="#fff"/><rect x="13" y="3" width="1" height="1" fill="#000"/><rect x="14" y="3" width="1" height="1" fill="#000"/><rect x="15" y="3" width="1" height="1" fill="#000"/><rect x="13" y="4" width="1" height="1" fill="#000"/><rect x="13" y="5" width="1" height="1" fill="#000"/><rect x="13" y="6" width="1" height="1" fill="#000"/><rect x="13" y="7" width="1" height="1" fill="#000"/><rect x="14" y="7" width="1" height="1" fill="#000"/><rect x="15" y="7" width="1" height="1" fill="#000"/></svg>
<svg class="a" style="left:409px;top:182px" width="17" height="11" viewBox="0 0 17 11"><rect x="5" y="0" width="7" height="11" fill="#3ea873"/><rect x="1" y="3" width="1" height="1" fill="#000"/><rect x="2" y="3" width="1" height="1" fill="#000"/><rect x="3" y="3" width="1" height="1" fill="#000"/><rect x="1" y="4" width="1" height="1" fill="#000"/><rect x="3" y="4" width="1" height="1" fill="#000"/><rect x="1" y="5" width="1" height="1" fill="#000"/><rect x="2" y="5" width="1" height="1" fill="#000"/><rect x="3" y="5" width="1" height="1" fill="#000"/><rect x="1" y="6" width="1" height="1" fill="#000"/><rect x="3" y="6" width="1" height="1" fill="#000"/><rect x="1" y="7" width="1" height="1" fill="#000"/><rect x="3" y="7" width="1" height="1" fill="#000"/><rect x="7" y="3" width="1" height="1" fill="#fff"/><rect x="8" y="3" width="1" height="1" fill="#fff"/><rect x="9" y="3" width="1" height="1" fill="#fff"/><rect x="7" y="4" width="1" height="1" fill="#fff"/><rect x="9" y="4" width="1" height="1" fill="#fff"/><rect x="7" y="5" width="1" height="1" fill="#fff"/><rect x="8" y="5" width="1" height="1" fill="#fff"/><rect x="9" y="5" width="1" height="1" fill="#fff"/><rect x="7" y="6" width="1" height="1" fill="#fff"/><rect x="9" y="6" width="1" height="1" fill="#fff"/><rect x="7" y="7" width="1" height="1" fill="#fff"/><rect x="8" y="7" width="1" height="1" fill="#fff"/><rect x="9" y="7" width="1" height="1" fill="#fff"/><rect x="13" y="3" width="1" height="1" fill="#000"/><rect x="14" y="3" width="1" height="1" fill="#000"/><rect x="15" y="3" width="1" height="1" fill="#000"/><rect x="13" y="4" width="1" height="1" fill="#000"/><rect x="13" y="5" width="1" height="1" fill="#000"/><rect x="13" y="6" width="1" height="1" fill="#000"/><rect x="13" y="7" width="1" height="1" fill="#000"/><rect x="14" y="7" width="1" height="1" fill="#000"/><rect x="15" y="7" width="1" height="1" fill="#000"/></svg>
<div class="a" style="left:657px;top:186px;width:9px;height:1px;background:#000;"></div>
<div class="a" style="left:657px;top:188px;width:9px;height:1px;background:#000;"></div>
<svg class="a" style="left:813px;top:182px" width="17" height="11" viewBox="0 0 17 11"><rect x="5" y="0" width="7" height="11" fill="#3ea873"/><rect x="1" y="3" width="1" height="1" fill="#000"/><rect x="2" y="3" width="1" height="1" fill="#000"/><rect x="3" y="3" width="1" height="1" fill="#000"/><rect x="1" y="4" width="1" height="1" fill="#000"/><rect x="3" y="4" width="1" height="1" fill="#000"/><rect x="1" y="5" width="1" height="1" fill="#000"/><rect x="2" y="5" width="1" height="1" fill="#000"/><rect x="3" y="5" width="1" height="1" fill="#000"/><rect x="1" y="6" width="1" height="1" fill="#000"/><rect x="3" y="6" width="1" height="1" fill="#000"/><rect x="1" y="7" width="1" height="1" fill="#000"/><rect x="3" y="7" width="1" height="1" fill="#000"/><rect x="7" y="3" width="1" height="1" fill="#fff"/><rect x="8" y="3" width="1" height="1" fill="#fff"/><rect x="9" y="3" width="1" height="1" fill="#fff"/><rect x="7" y="4" width="1" height="1" fill="#fff"/><rect x="9" y="4" width="1" height="1" fill="#fff"/><rect x="7" y="5" width="1" height="1" fill="#fff"/><rect x="8" y="5" width="1" height="1" fill="#fff"/><rect x="9" y="5" width="1" height="1" fill="#fff"/><rect x="7" y="6" width="1" height="1" fill="#fff"/><rect x="9" y="6" width="1" height="1" fill="#fff"/><rect x="7" y="7" width="1" height="1" fill="#fff"/><rect x="8" y="7" width="1" height="1" fill="#fff"/><rect x="9" y="7" width="1" height="1" fill="#fff"/><rect x="13" y="3" width="1" height="1" fill="#000"/><rect x="14" y="3" width="1" height="1" fill="#000"/><rect x="15" y="3" width="1" height="1" fill="#000"/><rect x="13" y="4" width="1" height="1" fill="#000"/><rect x="13" y="5" width="1" height="1" fill="#000"/><rect x="13" y="6" width="1" height="1" fill="#000"/><rect x="13" y="7" width="1" height="1" fill="#000"/><rect x="14" y="7" width="1" height="1" fill="#000"/><rect x="15" y="7" width="1" height="1" fill="#000"/></svg>
<svg class="a" style="left:912px;top:182px" width="17" height="11" viewBox="0 0 17 11"><rect x="5" y="0" width="7" height="11" fill="#3ea873"/><rect x="1" y="3" width="1" height="1" fill="#000"/><rect x="2" y="3" width="1" height="1" fill="#000"/><rect x="3" y="3" width="1" height="1" fill="#000"/><rect x="1" y="4" width="1" height="1" fill="#000"/><rect x="3" y="4" width="1" height="1" fill="#000"/><rect x="1" y="5" width="1" height="1" fill="#000"/><rect x="2" y="5" width="1" height="1" fill="#000"/><rect x="3" y="5" width="1" height="1" fill="#000"/><rect x="1" y="6" width="1" height="1" fill="#000"/><rect x="3" y="6" width="1" height="1" fill="#000"/><rect x="1" y="7" width="1" height="1" fill="#000"/><rect x="3" y="7" width="1" height="1" fill="#000"/><rect x="7" y="3" width="1" height="1" fill="#fff"/><rect x="8" y="3" width="1" height="1" fill="#fff"/><rect x="9" y="3" width="1" height="1" fill="#fff"/><rect x="7" y="4" width="1" height="1" fill="#fff"/><rect x="9" y="4" width="1" height="1" fill="#fff"/><rect x="7" y="5" width="1" height="1" fill="#fff"/><rect x="8" y="5" width="1" height="1" fill="#fff"/><rect x="9" y="5" width="1" height="1" fill="#fff"/><rect x="7" y="6" width="1" height="1" fill="#fff"/><rect x="9" y="6" width="1" height="1" fill="#fff"/><rect x="7" y="7" width="1" height="1" fill="#fff"/><rect x="8" y="7" width="1" height="1" fill="#fff"/><rect x="9" y="7" width="1" height="1" fill="#fff"/><rect x="13" y="3" width="1" height="1" fill="#000"/><rect x="14" y="3" width="1" height="1" fill="#000"/><rect x="15" y="3" width="1" height="1" fill="#000"/><rect x="13" y="4" width="1" height="1" fill="#000"/><rect x="13" y="5" width="1" height="1" fill="#000"/><rect x="13" y="6" width="1" height="1" fill="#000"/><rect x="13" y="7" width="1" height="1" fill="#000"/><rect x="14" y="7" width="1" height="1" fill="#000"/><rect x="15" y="7" width="1" height="1" fill="#000"/></svg>
<svg class="a" style="left:973px;top:183px" width="9" height="10" viewBox="0 0 9 10"><path d="M8 1 L1.5 5 L8 9" fill="none" stroke="#111" stroke-width="1.3"/></svg>
<div class="a" style="left:1075px;top:186px;width:9px;height:1px;background:#000;"></div>
<div class="a" style="left:1075px;top:188px;width:9px;height:1px;background:#000;"></div>
<div class="a" style="left:1172px;top:186px;width:9px;height:1px;background:#000;"></div>
<div class="a" style="left:1172px;top:188px;width:9px;height:1px;background:#000;"></div>
<div class="a" style="left:406px;top:220px;width:242px;height:19px;background:#fdf7e2;"></div>
<div class="a" style="left:407px;top:221px;width:237px;height:15px;border:1px dotted #a8a088"></div>
<div class="a" style="left:255px;top:219px;width:1021px;height:1px;background:repeating-linear-gradient(90deg,#6a6a6a 0 3px,transparent 3px 4px)"></div>
<div class="a" style="left:255px;top:240px;width:1021px;height:1px;background:repeating-linear-gradient(90deg,#6a6a6a 0 3px,transparent 3px 4px)"></div>
<div class="a" style="left:255px;top:219px;width:1px;height:22px;background:repeating-linear-gradient(180deg,#6a6a6a 0 3px,transparent 3px 4px)"></div>
<div class="a" style="left:1275px;top:219px;width:1px;height:22px;background:repeating-linear-gradient(180deg,#6a6a6a 0 3px,transparent 3px 4px)"></div>
<svg class="a" style="left:244px;top:227px" width="5" height="8" viewBox="0 0 5 8"><path d="M0 0 L4.5 3.5 L0 7Z" fill="#1d2540"/></svg>
<div class="t" style="left:279px;top:204px;font-size:11px;line-height:11px;color:#05060c;">00</div>
<div class="t" style="left:322px;top:204px;font-size:11px;line-height:11px;color:#05060c;">6006</div>
<div class="t" style="left:410px;top:204px;font-size:11px;line-height:11px;color:#05060c;">Tyč oceľová 10m</div>
<div class="t" style="left:652px;top:204px;font-size:11px;line-height:11px;color:#05060c;">Stavebný materiál - OCEĽ</div>
<div class="t" style="left:813px;top:204px;font-size:11px;line-height:11px;color:#05060c;">A5</div>
<div class="t" style="left:912px;top:204px;font-size:11px;line-height:11px;color:#05060c;">kg</div>
<div class="t" style="right:249px;top:204px;font-size:11px;line-height:11px;color:#05060c;">3 742,00</div>
<div class="t" style="right:151px;top:204px;font-size:11px;line-height:11px;color:#05060c;">3 742,00</div>
<div class="t" style="left:1168px;top:204px;font-size:11px;line-height:11px;color:#05060c;">U.S. Steel Košice…</div>
<div class="t" style="left:279px;top:225px;font-size:11px;line-height:11px;color:#05060c;">00</div>
<div class="t" style="left:322px;top:225px;font-size:11px;line-height:11px;color:#05060c;">10002</div>
<div class="t" style="left:410px;top:225px;font-size:11px;line-height:11px;color:#05060c;">Umývačka Gorenje</div>
<div class="t" style="left:652px;top:225px;font-size:11px;line-height:11px;color:#05060c;">Elektrospotrebiče</div>
<div class="t" style="left:813px;top:225px;font-size:11px;line-height:11px;color:#05060c;">A5</div>
<div class="t" style="left:912px;top:225px;font-size:11px;line-height:11px;color:#05060c;">ks</div>
<div class="t" style="right:249px;top:225px;font-size:11px;line-height:11px;color:#05060c;">70,00</div>
<div class="t" style="right:151px;top:225px;font-size:11px;line-height:11px;color:#05060c;">65,00</div>
<div class="t" style="left:1168px;top:225px;font-size:11px;line-height:11px;color:#05060c;">TUCEK s. r. o.</div>
<div class="t" style="left:279px;top:246px;font-size:11px;line-height:11px;color:#05060c;">00</div>
<div class="t" style="left:322px;top:246px;font-size:11px;line-height:11px;color:#05060c;">1000</div>
<div class="t" style="left:410px;top:246px;font-size:11px;line-height:11px;color:#05060c;">Varecha drevená</div>
<div class="t" style="left:652px;top:246px;font-size:11px;line-height:11px;color:#05060c;">Kuchynské nádoby</div>
<div class="t" style="left:813px;top:246px;font-size:11px;line-height:11px;color:#05060c;">A3</div>
<div class="t" style="left:912px;top:246px;font-size:11px;line-height:11px;color:#05060c;">ks</div>
<div class="t" style="right:249px;top:246px;font-size:11px;line-height:11px;color:#05060c;">85,00</div>
<div class="t" style="right:151px;top:246px;font-size:11px;line-height:11px;color:#05060c;">85,00</div>
<div class="t" style="left:1168px;top:246px;font-size:11px;line-height:11px;color:#05060c;">Accace k. s.</div>
<div class="t" style="left:279px;top:267px;font-size:11px;line-height:11px;color:#05060c;">00</div>
<div class="t" style="left:322px;top:267px;font-size:11px;line-height:11px;color:#05060c;">70005</div>
<div class="t" style="left:410px;top:267px;font-size:11px;line-height:11px;color:#05060c;">Vianočka</div>
<div class="t" style="left:652px;top:267px;font-size:11px;line-height:11px;color:#05060c;">Pečivo</div>
<div class="t" style="left:813px;top:267px;font-size:11px;line-height:11px;color:#05060c;">A5</div>
<div class="t" style="left:912px;top:267px;font-size:11px;line-height:11px;color:#05060c;">ks</div>
<div class="t" style="right:249px;top:267px;font-size:11px;line-height:11px;color:#05060c;">120,00</div>
<div class="t" style="right:151px;top:267px;font-size:11px;line-height:11px;color:#05060c;">120,00</div>
<div class="t" style="left:1168px;top:267px;font-size:11px;line-height:11px;color:#05060c;">VENTIL-GH Gmbh.</div>
<div class="t" style="left:279px;top:288px;font-size:11px;line-height:11px;color:#05060c;">00</div>
<div class="t" style="left:322px;top:288px;font-size:11px;line-height:11px;color:#05060c;">20001</div>
<div class="t" style="left:410px;top:288px;font-size:11px;line-height:11px;color:#05060c;">Víno Pereg cuvee cierny 0,75</div>
<div class="t" style="left:652px;top:288px;font-size:11px;line-height:11px;color:#05060c;">Vína</div>
<div class="t" style="left:813px;top:288px;font-size:11px;line-height:11px;color:#05060c;">A4</div>
<div class="t" style="left:912px;top:288px;font-size:11px;line-height:11px;color:#05060c;">ks</div>
<div class="t" style="right:249px;top:288px;font-size:11px;line-height:11px;color:#05060c;">105,00</div>
<div class="t" style="right:151px;top:288px;font-size:11px;line-height:11px;color:#05060c;">105,00</div>
<div class="t" style="left:1168px;top:288px;font-size:11px;line-height:11px;color:#05060c;">ADIVIT, spol. s r…</div>
<div class="t" style="left:259px;top:309px;font-size:11px;line-height:11px;color:#05060c;">X</div>
<div class="t" style="left:279px;top:309px;font-size:11px;line-height:11px;color:#05060c;">00</div>
<div class="t" style="left:322px;top:309px;font-size:11px;line-height:11px;color:#05060c;">20002</div>
<div class="t" style="left:410px;top:309px;font-size:11px;line-height:11px;color:#05060c;">Víno Pereg z čiernych ribezlí 0,75</div>
<div class="t" style="left:652px;top:309px;font-size:11px;line-height:11px;color:#05060c;">Vína</div>
<div class="t" style="left:813px;top:309px;font-size:11px;line-height:11px;color:#05060c;">A4</div>
<div class="t" style="left:912px;top:309px;font-size:11px;line-height:11px;color:#05060c;">ks</div>
<div class="t" style="right:249px;top:309px;font-size:11px;line-height:11px;color:#05060c;">15,00</div>
<div class="t" style="right:151px;top:309px;font-size:11px;line-height:11px;color:#05060c;">15,00</div>
<div class="t" style="left:1168px;top:309px;font-size:11px;line-height:11px;color:#05060c;">ADIVIT, spol. s r…</div>
<div class="t" style="left:259px;top:330px;font-size:11px;line-height:11px;color:#05060c;">X</div>
<div class="t" style="left:279px;top:330px;font-size:11px;line-height:11px;color:#05060c;">00</div>
<div class="t" style="left:322px;top:330px;font-size:11px;line-height:11px;color:#05060c;">20002-897615…</div>
<div class="t" style="left:410px;top:330px;font-size:11px;line-height:11px;color:#05060c;">Víno Pereg z čiernych ribezlí 0,75 variant</div>
<div class="t" style="left:652px;top:330px;font-size:11px;line-height:11px;color:#05060c;">Vína</div>
<div class="t" style="left:813px;top:330px;font-size:11px;line-height:11px;color:#05060c;">A5</div>
<div class="t" style="left:912px;top:330px;font-size:11px;line-height:11px;color:#05060c;">ks</div>
<div class="t" style="left:1168px;top:330px;font-size:11px;line-height:11px;color:#05060c;">ADIVIT, spol. s r…</div>
<div class="t" style="left:279px;top:351px;font-size:11px;line-height:11px;color:#05060c;">00</div>
<div class="t" style="left:322px;top:351px;font-size:11px;line-height:11px;color:#05060c;">100002</div>
<div class="t" style="left:410px;top:351px;font-size:11px;line-height:11px;color:#05060c;">Voda Royal Ionize</div>
<div class="t" style="left:813px;top:351px;font-size:11px;line-height:11px;color:#05060c;">A5</div>
<div class="t" style="left:912px;top:351px;font-size:11px;line-height:11px;color:#05060c;">ks</div>
<div class="t" style="right:249px;top:351px;font-size:11px;line-height:11px;color:#05060c;">79,00</div>
<div class="t" style="right:151px;top:351px;font-size:11px;line-height:11px;color:#05060c;">79,00</div>
<div class="t" style="left:279px;top:372px;font-size:11px;line-height:11px;color:#05060c;">00</div>
<div class="t" style="left:322px;top:372px;font-size:11px;line-height:11px;color:#05060c;">100001</div>
<div class="t" style="left:410px;top:372px;font-size:11px;line-height:11px;color:#05060c;">Voda Royal mineral 0,5l</div>
<div class="t" style="left:652px;top:372px;font-size:11px;line-height:11px;color:#05060c;">Pivo</div>
<div class="t" style="left:813px;top:372px;font-size:11px;line-height:11px;color:#05060c;">A5</div>
<div class="t" style="left:912px;top:372px;font-size:11px;line-height:11px;color:#05060c;">ks</div>
<div class="t" style="right:249px;top:372px;font-size:11px;line-height:11px;color:#05060c;">133,00</div>
<div class="t" style="right:151px;top:372px;font-size:11px;line-height:11px;color:#05060c;">133,00</div>
<div class="t" style="left:1168px;top:372px;font-size:11px;line-height:11px;color:#05060c;">CARTAXO s.r.o.</div>
<div class="t" style="left:259px;top:393px;font-size:11px;line-height:11px;color:#05060c;">X</div>
<div class="t" style="left:279px;top:393px;font-size:11px;line-height:11px;color:#05060c;">00</div>
<div class="t" style="left:322px;top:393px;font-size:11px;line-height:11px;color:#05060c;">80002</div>
<div class="t" style="left:410px;top:393px;font-size:11px;line-height:11px;color:#05060c;">Vozík</div>
<div class="t" style="left:652px;top:393px;font-size:11px;line-height:11px;color:#05060c;">Oceľový výrobok</div>
<div class="t" style="left:813px;top:393px;font-size:11px;line-height:11px;color:#05060c;">A4</div>
<div class="t" style="left:912px;top:393px;font-size:11px;line-height:11px;color:#05060c;">ks</div>
<div class="t" style="left:279px;top:414px;font-size:11px;line-height:11px;color:#05060c;">00</div>
<div class="t" style="left:322px;top:414px;font-size:11px;line-height:11px;color:#05060c;">900003</div>
<div class="t" style="left:410px;top:414px;font-size:11px;line-height:11px;color:#05060c;">Výpalok RRR</div>
<div class="t" style="left:652px;top:414px;font-size:11px;line-height:11px;color:#05060c;">Stavebný materiál - OCEĽ</div>
<div class="t" style="left:813px;top:414px;font-size:11px;line-height:11px;color:#05060c;">A5</div>
<div class="t" style="left:912px;top:414px;font-size:11px;line-height:11px;color:#05060c;">ks</div>
<div class="t" style="right:249px;top:414px;font-size:11px;line-height:11px;color:#05060c;">53,00</div>
<div class="t" style="right:151px;top:414px;font-size:11px;line-height:11px;color:#05060c;">53,00</div>
<div class="t" style="left:259px;top:435px;font-size:11px;line-height:11px;color:#05060c;">X</div>
<div class="t" style="left:279px;top:435px;font-size:11px;line-height:11px;color:#05060c;">00</div>
<div class="t" style="left:322px;top:435px;font-size:11px;line-height:11px;color:#05060c;">80003</div>
<div class="t" style="left:410px;top:435px;font-size:11px;line-height:11px;color:#05060c;">Výrobok 3</div>
<div class="t" style="left:652px;top:435px;font-size:11px;line-height:11px;color:#05060c;">Oceľový výrobok</div>
<div class="t" style="left:813px;top:435px;font-size:11px;line-height:11px;color:#05060c;">A5</div>
<div class="t" style="left:912px;top:435px;font-size:11px;line-height:11px;color:#05060c;">ks</div>
<div class="a" style="left:665px;top:454px;width:2px;height:2px;background:#555;"></div>
<div class="a" style="left:916px;top:454px;width:1px;height:3px;background:#555;"></div>
<div class="a" style="left:235px;top:457px;width:1059px;height:1px;background:#a9b1c4;"></div>
<div class="a" style="left:235px;top:458px;width:1px;height:48px;background:#a9b1c4;"></div>
<div class="a" style="left:1293px;top:458px;width:1px;height:48px;background:#a9b1c4;"></div>
<svg class="a" style="left:241px;top:492px" width="5" height="9" viewBox="0 0 5 9"><path d="M5 0 L0 4.5 L5 9Z" fill="#6a7890"/></svg>
<svg class="a" style="left:1282px;top:492px" width="5" height="9" viewBox="0 0 5 9"><path d="M0 0 L5 4.5 L0 9Z" fill="#6a7890"/></svg>
<div class="a" style="left:253px;top:492px;width:675px;height:9px;background:#a3adbb;"></div>
<div class="a" style="left:235px;top:505px;width:1059px;height:1px;background:#a9b1c4;"></div>
<div class="a" style="left:235px;top:506px;width:1px;height:48px;background:#a9b1c4;"></div>
<div class="a" style="left:1293px;top:506px;width:1px;height:48px;background:#a9b1c4;"></div>
<div class="a" style="left:235px;top:553px;width:1059px;height:1px;background:#a9b1c4;"></div>
<svg class="a" style="left:245px;top:533px" width="10" height="9" viewBox="0 0 10 9"><path d="M1 1 L9 8 M9 1 L1 8" stroke="#6a7488" stroke-width="1.4"/></svg>
<div class="a" style="left:262px;top:530px;width:11px;height:11px;border:1px solid #8a94a8;background:#fff;"></div>
<svg class="a" style="left:264px;top:532px" width="10" height="9" viewBox="0 0 10 9"><path d="M1 4.5 L3.8 7.5 L9 1" fill="none" stroke="#4a5470" stroke-width="1.3"/></svg>
<svg class="a" style="left:279px;top:523px" width="5" height="26" viewBox="0 0 5 26"><path d="M4.5 0.5 H0.8 V25.5 H4.5" fill="none" stroke="#7c8698" stroke-width="1"/></svg>
<div class="a" style="left:283px;top:526px;width:84px;height:20px;background:#dcc7c9;"></div>
<div class="t" style="left:287px;top:531px;font-size:11px;line-height:11px;color:#1e2a4a;">Pozícia v sklade</div>
<div class="t" style="left:371px;top:531px;font-size:11px;line-height:11px;color:#1e2a4a;">V</div>
<div class="a" style="left:381px;top:526px;width:23px;height:20px;background:#b9c9bd;"></div>
<div class="t" style="left:385px;top:531px;font-size:11px;line-height:11px;color:#1e2a4a;">A1</div>
<div class="a" style="left:406px;top:526px;width:22px;height:20px;background:#b9c9bd;"></div>
<div class="t" style="left:410px;top:531px;font-size:11px;line-height:11px;color:#1e2a4a;">A2</div>
<div class="a" style="left:431px;top:526px;width:22px;height:20px;background:#b9c9bd;"></div>
<div class="t" style="left:435px;top:531px;font-size:11px;line-height:11px;color:#1e2a4a;">A3</div>
<div class="a" style="left:456px;top:526px;width:23px;height:20px;background:#b9c9bd;"></div>
<div class="t" style="left:460px;top:531px;font-size:11px;line-height:11px;color:#1e2a4a;">A4</div>
<div class="a" style="left:481px;top:526px;width:23px;height:20px;background:#b9c9bd;"></div>
<div class="t" style="left:485px;top:531px;font-size:11px;line-height:11px;color:#1e2a4a;">A5</div>
<svg class="a" style="left:503px;top:523px" width="5" height="26" viewBox="0 0 5 26"><path d="M0.5 0.5 H4.2 V25.5 H0.5" fill="none" stroke="#7c8698" stroke-width="1"/></svg>
<svg class="a" style="left:524px;top:535px" width="6" height="3" viewBox="0 0 6 3"><path d="M0 0 H6 L3 3Z" fill="#7c8698"/></svg>
<div class="t" style="left:1224px;top:532px;font-size:11px;line-height:11px;color:#1e2a4a;">Upraviť filter</div>
<div class="t" style="left:248px;top:564px;font-size:11px;line-height:11px;color:#1e2a4a;">134 záznamov</div>
<div class="a" style="left:327px;top:556px;width:1px;height:27px;background:#e6e9f0;"></div>
<svg class="a" style="left:338px;top:561px" width="17" height="17" viewBox="0 0 17 17"><path d="M1 1.5 H16 L10 8.5 V15.5 H7 V8.5Z" fill="#f0f2f6" stroke="#6a7488" stroke-width="1.2"/></svg>
<svg class="a" style="left:369px;top:568px" width="5" height="3" viewBox="0 0 5 3"><path d="M0 0 H5 L2.5 3Z" fill="#333"/></svg>
<div class="a" style="left:755px;top:593px;width:1px;height:1px;background:#565d6e;"></div>
<div class="a" style="left:759px;top:593px;width:1px;height:1px;background:#565d6e;"></div>
<div class="a" style="left:763px;top:593px;width:1px;height:1px;background:#565d6e;"></div>
<div class="a" style="left:767px;top:593px;width:1px;height:1px;background:#565d6e;"></div>
<div class="a" style="left:771px;top:593px;width:1px;height:1px;background:#565d6e;"></div>
<div class="a" style="left:757px;top:595px;width:1px;height:1px;background:#565d6e;"></div>
<div class="a" style="left:761px;top:595px;width:1px;height:1px;background:#565d6e;"></div>
<div class="a" style="left:765px;top:595px;width:1px;height:1px;background:#565d6e;"></div>
<div class="a" style="left:769px;top:595px;width:1px;height:1px;background:#565d6e;"></div>
<div class="a" style="left:755px;top:597px;width:1px;height:1px;background:#565d6e;"></div>
<div class="a" style="left:759px;top:597px;width:1px;height:1px;background:#565d6e;"></div>
<div class="a" style="left:763px;top:597px;width:1px;height:1px;background:#565d6e;"></div>
<div class="a" style="left:767px;top:597px;width:1px;height:1px;background:#565d6e;"></div>
<div class="a" style="left:771px;top:597px;width:1px;height:1px;background:#565d6e;"></div>
<div class="a" style="left:235px;top:634px;width:1059px;height:221px;background:#a9b1c4;"></div>
<div class="a" style="left:236px;top:635px;width:1057px;height:219px;background:#d6dae8;"></div>
<div class="a" style="left:236px;top:606px;width:83px;height:29px;background:#9ea6b7;"></div>
<div class="a" style="left:237px;top:607px;width:81px;height:27px;background:#d0d5e3;"></div>
<svg class="a" style="left:248px;top:611px" width="14" height="16" viewBox="0 0 14 16"><rect x="0.5" y="0.5" width="13" height="15" fill="#fff" stroke="#777"/><path d="M3 3.5 H11 M3 5.5 H11 M3 7.5 H11 M3 9.5 H11 M3 11.5 H11 M3 13.5 H11" stroke="#888" stroke-width="0.8"/></svg>
<div class="t" style="left:265px;top:614px;font-size:11px;line-height:11px;color:#0e1630;">Pohyby</div>
<div class="a" style="left:318px;top:606px;width:90px;height:29px;background:#9ea6b7;"></div>
<div class="a" style="left:319px;top:607px;width:88px;height:28px;background:#d6dae8;"></div>
<svg class="a" style="left:331px;top:612px" width="16" height="15" viewBox="0 0 16 15"><defs><linearGradient id="imgg2" x1="0" y1="0" x2="1" y2="1"><stop offset="0" stop-color="#ffffff"/><stop offset="1" stop-color="#98b4e8"/></linearGradient></defs><rect x="0.5" y="0.5" width="13" height="13" fill="url(#imgg2)" stroke="#20408a"/><path d="M1 12 L4.5 7 L8.5 10 L10.5 8.5 L13 11.5 V13 H1Z" fill="#8a9cc4" opacity="0.55"/><path d="M1 11.5 L4.5 7 L9 10.5 M8 9.5 L9.5 8.5 L13 12" fill="none" stroke="#2a3040" stroke-width="0.9"/><circle cx="9.5" cy="3.8" r="1.9" fill="#e85a10" stroke="#f4904a" stroke-width="0.8"/></svg>
<div class="t" style="left:349px;top:614px;font-size:11px;line-height:11px;color:#0e1630;font-weight:bold;letter-spacing:0.5px">Obrázky</div>
<div class="a" style="left:407px;top:606px;width:81px;height:29px;background:#9ea6b7;"></div>
<div class="a" style="left:408px;top:607px;width:79px;height:27px;background:#d0d5e3;"></div>
<svg class="a" style="left:420px;top:611px" width="12" height="17" viewBox="0 0 12 17"><path d="M4 5 V13 A2.5 2.5 0 0 0 9 13 V4 A4 4 0 0 0 1 4 V12" fill="none" stroke="#555" stroke-width="1.6"/></svg>
<div class="t" style="left:436px;top:614px;font-size:11px;line-height:11px;color:#0e1630;">Prílohy</div>
<div class="a" style="left:487px;top:606px;width:90px;height:29px;background:#9ea6b7;"></div>
<div class="a" style="left:488px;top:607px;width:88px;height:27px;background:#d0d5e3;"></div>
<svg class="a" style="left:498px;top:611px" width="15" height="15" viewBox="0 0 15 15"><rect x="0.5" y="0.5" width="14" height="14" fill="#fff" stroke="#6a6a6a"/><rect x="2" y="2" width="3" height="3" fill="#8a8a8a"/><rect x="2" y="6" width="3" height="3" fill="#8a8a8a"/><rect x="2" y="10" width="3" height="3" fill="#8a8a8a"/><rect x="6" y="2" width="3" height="3" fill="#8a8a8a"/><rect x="6" y="6" width="3" height="3" fill="#8a8a8a"/><rect x="6" y="10" width="3" height="3" fill="#8a8a8a"/><rect x="10" y="2" width="3" height="3" fill="#8a8a8a"/><rect x="10" y="6" width="3" height="3" fill="#8a8a8a"/><rect x="10" y="10" width="3" height="3" fill="#8a8a8a"/></svg>
<div class="t" style="left:516px;top:614px;font-size:11px;line-height:11px;color:#0e1630;">Varianty</div>
<div class="a" style="left:576px;top:606px;width:114px;height:29px;background:#9ea6b7;"></div>
<div class="a" style="left:577px;top:607px;width:112px;height:27px;background:#d0d5e3;"></div>
<svg class="a" style="left:589px;top:611px" width="14" height="16" viewBox="0 0 14 16"><rect x="0.5" y="0.5" width="6" height="4" fill="#fff" stroke="#666"/><rect x="6.5" y="6.5" width="6" height="4" fill="#fff" stroke="#666"/><rect x="6.5" y="11.5" width="6" height="4" fill="#fff" stroke="#666"/><path d="M3 5 V13.5 H6.5 M3 8.5 H6.5" fill="none" stroke="#666"/></svg>
<div class="t" style="left:605px;top:614px;font-size:11px;line-height:11px;color:#0e1630;">Komponenty</div>
<div class="a" style="left:689px;top:606px;width:138px;height:29px;background:#9ea6b7;"></div>
<div class="a" style="left:690px;top:607px;width:136px;height:27px;background:#d0d5e3;"></div>
<svg class="a" style="left:701px;top:611px" width="16" height="16" viewBox="0 0 16 16"><circle cx="5.5" cy="5.5" r="3.6" fill="none" stroke="#555" stroke-width="2.5" stroke-dasharray="2 1.2"/><circle cx="11" cy="11" r="3" fill="none" stroke="#555" stroke-width="2.2" stroke-dasharray="1.8 1.1"/></svg>
<div class="t" style="left:718px;top:614px;font-size:11px;line-height:11px;color:#0e1630;">Výkonová norma</div>
<div class="a" style="left:826px;top:606px;width:101px;height:29px;background:#9ea6b7;"></div>
<div class="a" style="left:827px;top:607px;width:99px;height:27px;background:#d0d5e3;"></div>
<svg class="a" style="left:838px;top:611px" width="14" height="16" viewBox="0 0 14 16"><path d="M3 1.5 L13 3 L11 15 L1.5 13.5Z" fill="#fafafa" stroke="#555"/><path d="M3 1.5 L5 4" stroke="#555"/></svg>
<div class="t" style="left:855px;top:614px;font-size:11px;line-height:11px;color:#0e1630;">Poznámka</div>
<div class="a" style="left:926px;top:606px;width:90px;height:29px;background:#9ea6b7;"></div>
<div class="a" style="left:927px;top:607px;width:88px;height:27px;background:#d0d5e3;"></div>
<svg class="a" style="left:937px;top:611px" width="16" height="16" viewBox="0 0 16 16"><rect x="0.5" y="0.5" width="12" height="12" fill="#fff" stroke="#555"/><rect x="1" y="1" width="11" height="2.5" fill="#777"/><path d="M4.5 1 V12 M8.5 1 V12 M1 7 H12" stroke="#555"/><rect x="7.5" y="8.5" width="8" height="7" fill="#fff" stroke="#555"/><path d="M9 11 H14 M9 13 H14" stroke="#555"/></svg>
<div class="t" style="left:955px;top:614px;font-size:11px;line-height:11px;color:#0e1630;">Zákazky</div>
<div class="a" style="left:1015px;top:606px;width:86px;height:29px;background:#9ea6b7;"></div>
<div class="a" style="left:1016px;top:607px;width:84px;height:27px;background:#d0d5e3;"></div>
<svg class="a" style="left:1028px;top:612px" width="12" height="15" viewBox="0 0 12 15"><path d="M0.5 0.5 H8 L11.5 4 V14.5 H0.5Z" fill="#fff" stroke="#777"/><path d="M3 4 H5 M3 7 H5 M6 7 H9 M3 10 H5 M6 10 H9" stroke="#888" stroke-width="0.8"/></svg>
<div class="t" style="left:1044px;top:614px;font-size:11px;line-height:11px;color:#0e1630;">Stav NV</div>
<div class="a" style="left:1100px;top:606px;width:134px;height:29px;background:#9ea6b7;"></div>
<div class="a" style="left:1101px;top:607px;width:132px;height:27px;background:#d0d5e3;"></div>
<svg class="a" style="left:1114px;top:612px" width="12" height="15" viewBox="0 0 12 15"><path d="M0.5 0.5 H8 L11.5 4 V14.5 H0.5Z" fill="#fff" stroke="#777"/><path d="M3 4 H5 M3 7 H5 M6 7 H9 M3 10 H5 M6 10 H9" stroke="#888" stroke-width="0.8"/></svg>
<div class="t" style="left:1129px;top:614px;font-size:11px;line-height:11px;color:#0e1630;">Výrobné príkazy</div>
<svg class="a" style="left:1242px;top:616px" width="9" height="5" viewBox="0 0 9 5"><path d="M0 0 H9 L4.5 5Z" fill="#1e2a4a"/></svg>
<svg class="a" style="left:1263px;top:615px" width="4" height="7" viewBox="0 0 4 7"><path d="M4 0 L0 3.5 L4 7Z" fill="#9aa3b5"/></svg>
<svg class="a" style="left:1282px;top:615px" width="4" height="7" viewBox="0 0 4 7"><path d="M0 0 L4 3.5 L0 7Z" fill="#1e2a4a"/></svg>
<div class="a" style="left:319px;top:634px;width:88px;height:1px;background:#d6dae8;"></div>
<div class="a" style="left:248px;top:647px;width:11px;height:11px;border:1px solid #8a94a8;background:#fff;"></div>
<svg class="a" style="left:250px;top:649px" width="10" height="9" viewBox="0 0 10 9"><path d="M1 4.5 L3.8 7.5 L9 1" fill="none" stroke="#4a5470" stroke-width="1.3"/></svg>
<div class="t" style="left:265px;top:649px;font-size:11px;line-height:11px;color:#1e2a4a;">Edit mód</div>
<svg class="a" style="left:316px;top:646px" width="17" height="17" viewBox="0 0 17 17"><defs><linearGradient id="plg" x1="0" y1="0" x2="0" y2="1"><stop offset="0" stop-color="#e6f68a"/><stop offset="1" stop-color="#9ccc2a"/></linearGradient></defs><path d="M5.5 0.5 H10.5 V5.5 H15.5 V10.5 H10.5 V15.5 H5.5 V10.5 H0.5 V5.5 H5.5Z" fill="url(#plg)" stroke="#6a9a18"/></svg>
<svg class="a" style="left:342px;top:646px" width="18" height="17" viewBox="0 0 18 17"><path d="M5.5 0.5 H10.5 V5.5 H15.5 V10.5 H10.5 V15.5 H5.5 V10.5 H0.5 V5.5 H5.5Z" fill="url(#plg)" stroke="#6a9a18"/><circle cx="12.5" cy="12" r="4.5" fill="#2e9e3e" stroke="#e8f4e8" stroke-width="0.8"/><path d="M12.5 9.3 V14.7 M9.8 12 H15.2" stroke="#fff" stroke-width="1.5"/></svg>
<svg class="a" style="left:367px;top:644px" width="18" height="19" viewBox="0 0 18 19"><path d="M4 3 L10 9" stroke="#e00010" stroke-width="2.6" stroke-linecap="round"/><path d="M3.4 17.5 L1.2 15.3 L14.2 4 L14.9 4.8Z" fill="#d80010"/><circle cx="2.3" cy="16.4" r="1.6" fill="#d80010"/><path d="M10 9 L16.4 15.6" stroke="#c01030" stroke-width="1.1"/></svg>
<svg class="a" style="left:395px;top:646px" width="16" height="14" viewBox="0 0 16 14"><rect x="0.5" y="0.5" width="15" height="13" fill="#e8eef8" stroke="#5a7aaa"/><rect x="2" y="2" width="12" height="10" fill="#7cb850"/><circle cx="8" cy="6" r="3" fill="#f0a020"/><path d="M2 12 L6 8 L10 12Z" fill="#4a8a30"/></svg>
<svg class="a" style="left:420px;top:646px" width="18" height="16" viewBox="0 0 18 16"><path d="M4 6.5 A5 5 0 0 1 14 6" fill="none" stroke="#56cc3a" stroke-width="2.8"/><path d="M0.8 1.8 V9.2 H8.2Z" fill="#4cc232"/><path d="M3.5 9 A5 5 0 0 0 13.5 8.5" fill="none" stroke="#38b02a" stroke-width="2.8"/><path d="M9.5 6.8 H17 V14.2Z" fill="#1e9a1e"/></svg>
<div class="a" style="left:446px;top:644px;width:151px;height:18px;border:1px solid #a3abbc;background:#fff;"></div>
<svg class="a" style="left:587px;top:652px" width="7" height="4" viewBox="0 0 7 4"><path d="M0 0 H7 L3.5 4Z" fill="#6a7488"/></svg>
<div class="t" style="left:607px;top:649px;font-size:11px;line-height:11px;color:#1e2a4a;">Zobrazenie</div>
<div class="a" style="left:665px;top:644px;width:187px;height:18px;border:1px solid #a3abbc;background:#fff;"></div>
<div class="t" style="left:670px;top:649px;font-size:11px;line-height:11px;color:#05060c;">Veľmi veľké ikony</div>
<svg class="a" style="left:842px;top:652px" width="7" height="4" viewBox="0 0 7 4"><path d="M0 0 H7 L3.5 4Z" fill="#6a7488"/></svg>
<div class="a" style="left:866px;top:652px;width:9px;height:2px;background:#6a7488;"></div>
<div class="a" style="left:880px;top:652px;width:123px;height:3px;background:#6a7488;"></div>
<div class="a" style="left:881px;top:653px;width:121px;height:1px;background:#eef1f6;"></div>
<div class="a" style="left:941px;top:648px;width:2px;height:11px;background:#6a7488;"></div>
<div class="a" style="left:883px;top:648px;width:4px;height:9px;border:1px solid #5a6478;background:#f4f0b0;"></div>
<svg class="a" style="left:1007px;top:648px" width="11" height="11" viewBox="0 0 11 11"><path d="M4 0.5 H7 V4 H10.5 V7 H7 V10.5 H4 V7 H0.5 V4 H4Z" fill="#fff" stroke="#5a6478"/></svg>
<svg class="a" style="left:1266px;top:647px" width="14" height="14" viewBox="0 0 14 14"><rect x="0.5" y="0.5" width="13" height="13" rx="2.5" fill="#d42a1a" stroke="#a01810"/><path d="M4 4 L10 10 M10 4 L4 10" stroke="#fff" stroke-width="2"/></svg>
<div class="a" style="left:243px;top:670px;width:1043px;height:177px;background:#a9b1c4;"></div>
<div class="a" style="left:244px;top:671px;width:1041px;height:175px;background:#ffffff;"></div>
<div class="a" style="left:1268px;top:671px;width:17px;height:175px;background:#d5dae6;"></div>
<svg class="a" style="left:1272px;top:677px" width="9" height="5" viewBox="0 0 9 5"><path d="M0 5 L4.5 0 L9 5Z" fill="#6a7890"/></svg>
<svg class="a" style="left:1272px;top:836px" width="9" height="5" viewBox="0 0 9 5"><path d="M0 0 L4.5 5 L9 0Z" fill="#6a7890"/></svg>
<div class="a" style="left:1272px;top:688px;width:9px;height:122px;background:#a3adbb;"></div>
<svg class="a" style="left:261px;top:682px" width="7" height="6" viewBox="0 0 7 6"><path d="M6.5 0 V6 H0Z" fill="#6a6a6a"/></svg>
<div class="t" style="left:281px;top:680px;font-size:12px;line-height:12px;color:#0000f0;font-weight:bold;letter-spacing:0px">OBRVELKY</div>
<div class="a" style="left:348px;top:684px;width:903px;height:1px;background:#8a94aa;"></div>
<svg class="a" style="left:300px;top:700px" width="135" height="135" viewBox="0 0 135 135">
<defs>
<linearGradient id="top" x1="0" y1="0" x2="0" y2="1"><stop offset="0" stop-color="#f6f6f6"/><stop offset="1" stop-color="#e2e2e2"/></linearGradient>
<linearGradient id="front" x1="0" y1="0" x2="0" y2="1"><stop offset="0" stop-color="#fafafa"/><stop offset="1" stop-color="#d4d4d4"/></linearGradient>
<linearGradient id="rail" x1="0" y1="0" x2="1" y2="0"><stop offset="0" stop-color="#a8acb0"/><stop offset="1" stop-color="#d8dadc"/></linearGradient>
<pattern id="rk" width="5" height="4" patternUnits="userSpaceOnUse"><rect width="5" height="4" fill="#6a6c6e"/><rect x="0" y="0" width="2" height="2" fill="#a4a6a8"/><rect x="3" y="2" width="1" height="2" fill="#3a3c3e"/></pattern>
<pattern id="rk2" width="4" height="5" patternUnits="userSpaceOnUse"><rect width="4" height="5" fill="#7a7c7e"/><rect x="1" y="0" width="1" height="5" fill="#b0b2b4"/><rect x="3" y="1" width="1" height="2" fill="#46484a"/></pattern>
<pattern id="grill" width="4" height="4" patternUnits="userSpaceOnUse"><rect width="4" height="4" fill="#c8ccd0"/><rect x="1" y="1" width="2" height="2" fill="#7a7e82"/></pattern>
<pattern id="low" width="6" height="4" patternUnits="userSpaceOnUse"><rect width="6" height="4" fill="#2e3032"/><rect x="0" y="0" width="1" height="4" fill="#6a6c6e"/><rect x="3" y="2" width="2" height="1" fill="#8a8c8e"/></pattern>
</defs>
<path d="M26 9 H106 L127 36 V45 H7 V36Z" fill="url(#top)"/>
<path d="M26 9 H106" stroke="#e0e0e0"/>
<rect x="7" y="36" width="120" height="9" fill="url(#front)"/>
<rect x="9" y="45" width="9" height="85" fill="#cfd1d3"/>
<rect x="114" y="45" width="12" height="85" fill="#c6c8ca"/>
<rect x="16" y="46" width="100" height="84" fill="#3a3c3e"/>
<rect x="20" y="49" width="50" height="45" fill="url(#rk)"/>
<rect x="75" y="49" width="38" height="45" fill="url(#rk2)"/>
<path d="M17 48 L22 49 L11 95 L5 95Z" fill="url(#rail)"/>
<path d="M108 49 L114 48 L128 95 L122 95Z" fill="url(#rail)"/>
<rect x="70" y="48" width="5" height="48" fill="#b0b4b8"/>
<path d="M21 78 Q33 70 46 74 V96 H21Z" fill="url(#grill)"/>
<ellipse cx="57" cy="60" rx="8" ry="6" fill="#f0f0f0"/>
<rect x="49" y="72" width="17" height="24" rx="5" fill="#f4f4f4"/>
<rect x="6" y="93" width="123" height="12" fill="#8e9296"/>
<rect x="6" y="93" width="123" height="2" fill="#b4b8bc"/>
<rect x="32" y="95" width="68" height="10" fill="#a0a4a8"/>
<rect x="18" y="105" width="96" height="25" fill="url(#low)"/>
<rect x="40" y="112" width="50" height="3" fill="#8a8c8e"/>
</svg>
<div class="a" style="left:7px;top:864px;width:1297px;height:31px;background:#a9b1c4;"></div>
<div class="a" style="left:8px;top:864px;width:1295px;height:30px;background:#d0d6e5;"></div>
<svg class="a" style="left:17px;top:871px" width="17" height="16" viewBox="0 0 17 16"><ellipse cx="6" cy="9" rx="5" ry="3.5" fill="#dfe8f6" stroke="#6a8ac0"/><path d="M9 12 L14 15" stroke="#2a4a9a" stroke-width="2"/><circle cx="11" cy="4" r="3" fill="#e8a838"/><path d="M10 1 A3 3 0 0 1 14 3" fill="#6a3a1a"/><path d="M7 12 A4 4 0 0 1 15 12 V13 H7Z" fill="#3a7ac8"/></svg>
<div class="t" style="left:36px;top:874px;font-size:11px;line-height:11px;color:#4a5a80;">Dudášová</div>
<svg class="a" style="left:99px;top:872px" width="16" height="12" viewBox="0 0 16 12"><rect x="0" y="1" width="16" height="4" fill="#fff"/><rect x="0" y="5" width="16" height="3.5" fill="#1a4ab8"/><rect x="0" y="8.5" width="16" height="3.5" fill="#e02020"/><path d="M3 3 H8 V7.5 A2.5 2.5 0 0 1 5.5 10 A2.5 2.5 0 0 1 3 7.5Z" fill="#e02020" stroke="#fff" stroke-width="0.8"/></svg>
<svg class="a" style="left:134px;top:870px" width="14" height="17" viewBox="0 0 14 17"><rect x="1" y="2" width="12" height="13" fill="#e0a830"/><ellipse cx="7" cy="2.5" rx="6" ry="2" fill="#f6d070"/><ellipse cx="7" cy="15" rx="6" ry="2" fill="#c88a18"/><path d="M1 6.5 A6 2 0 0 0 13 6.5 M1 10.5 A6 2 0 0 0 13 10.5" fill="none" stroke="#b87a10" stroke-width="0.8"/></svg>
<div class="t" style="left:152px;top:874px;font-size:11px;line-height:11px;color:#4a5a80;">IVANAD test (MySQL/IVANADtest, V2246)</div>
<div class="a" style="left:365px;top:866px;width:1px;height:26px;background:#e8ebf2;"></div>
<svg class="a" style="left:382px;top:871px" width="15" height="15" viewBox="0 0 15 15"><circle cx="7.5" cy="7.5" r="6.8" fill="#e88a30" stroke="#b05a10"/><path d="M4 7.5 L6.5 10 L11 5" fill="none" stroke="#fff" stroke-width="1.8"/></svg>
<div class="t" style="left:400px;top:874px;font-size:11px;line-height:11px;color:#4a5a80;">2.32.532</div>
<div class="a" style="left:456px;top:866px;width:1px;height:26px;background:#e8ebf2;"></div>
<svg class="a" style="left:467px;top:871px" width="17" height="16" viewBox="0 0 17 16"><rect x="0.5" y="0.5" width="13" height="13" fill="#f6f6f6" stroke="#777"/><rect x="3" y="2" width="8" height="2" fill="#888"/><circle cx="5" cy="9" r="2.5" fill="#d02a2a"/><circle cx="12" cy="12" r="4" fill="#3aa83a"/><path d="M10 12 L11.5 13.5 L14 10.5" fill="none" stroke="#fff" stroke-width="1.3"/></svg>
<svg class="a" style="left:1130px;top:870px" width="16" height="16" viewBox="0 0 16 16"><path d="M1.5 1.5 H11 L13.5 4 V15 H1.5Z" fill="#fafafa" stroke="#777"/><path d="M3 4 L4 5 L6 3 M3 8 L4 9 L6 7 M3 12 L4 13 L6 11" fill="none" stroke="#d02a2a" stroke-width="0.9"/><path d="M6 14 L14 5" stroke="#e0a020" stroke-width="2.5"/><path d="M13 4 L15 6" stroke="#d02a2a" stroke-width="2.5"/></svg>
<div class="t" style="left:1151px;top:874px;font-size:11px;line-height:11px;color:#4a5a80;">3 dokončené úlohy</div>
<svg class="a" style="left:1287px;top:877px" width="6" height="3" viewBox="0 0 6 3"><path d="M0 0 H6 L3 3Z" fill="#6a7488"/></svg></body></html>
